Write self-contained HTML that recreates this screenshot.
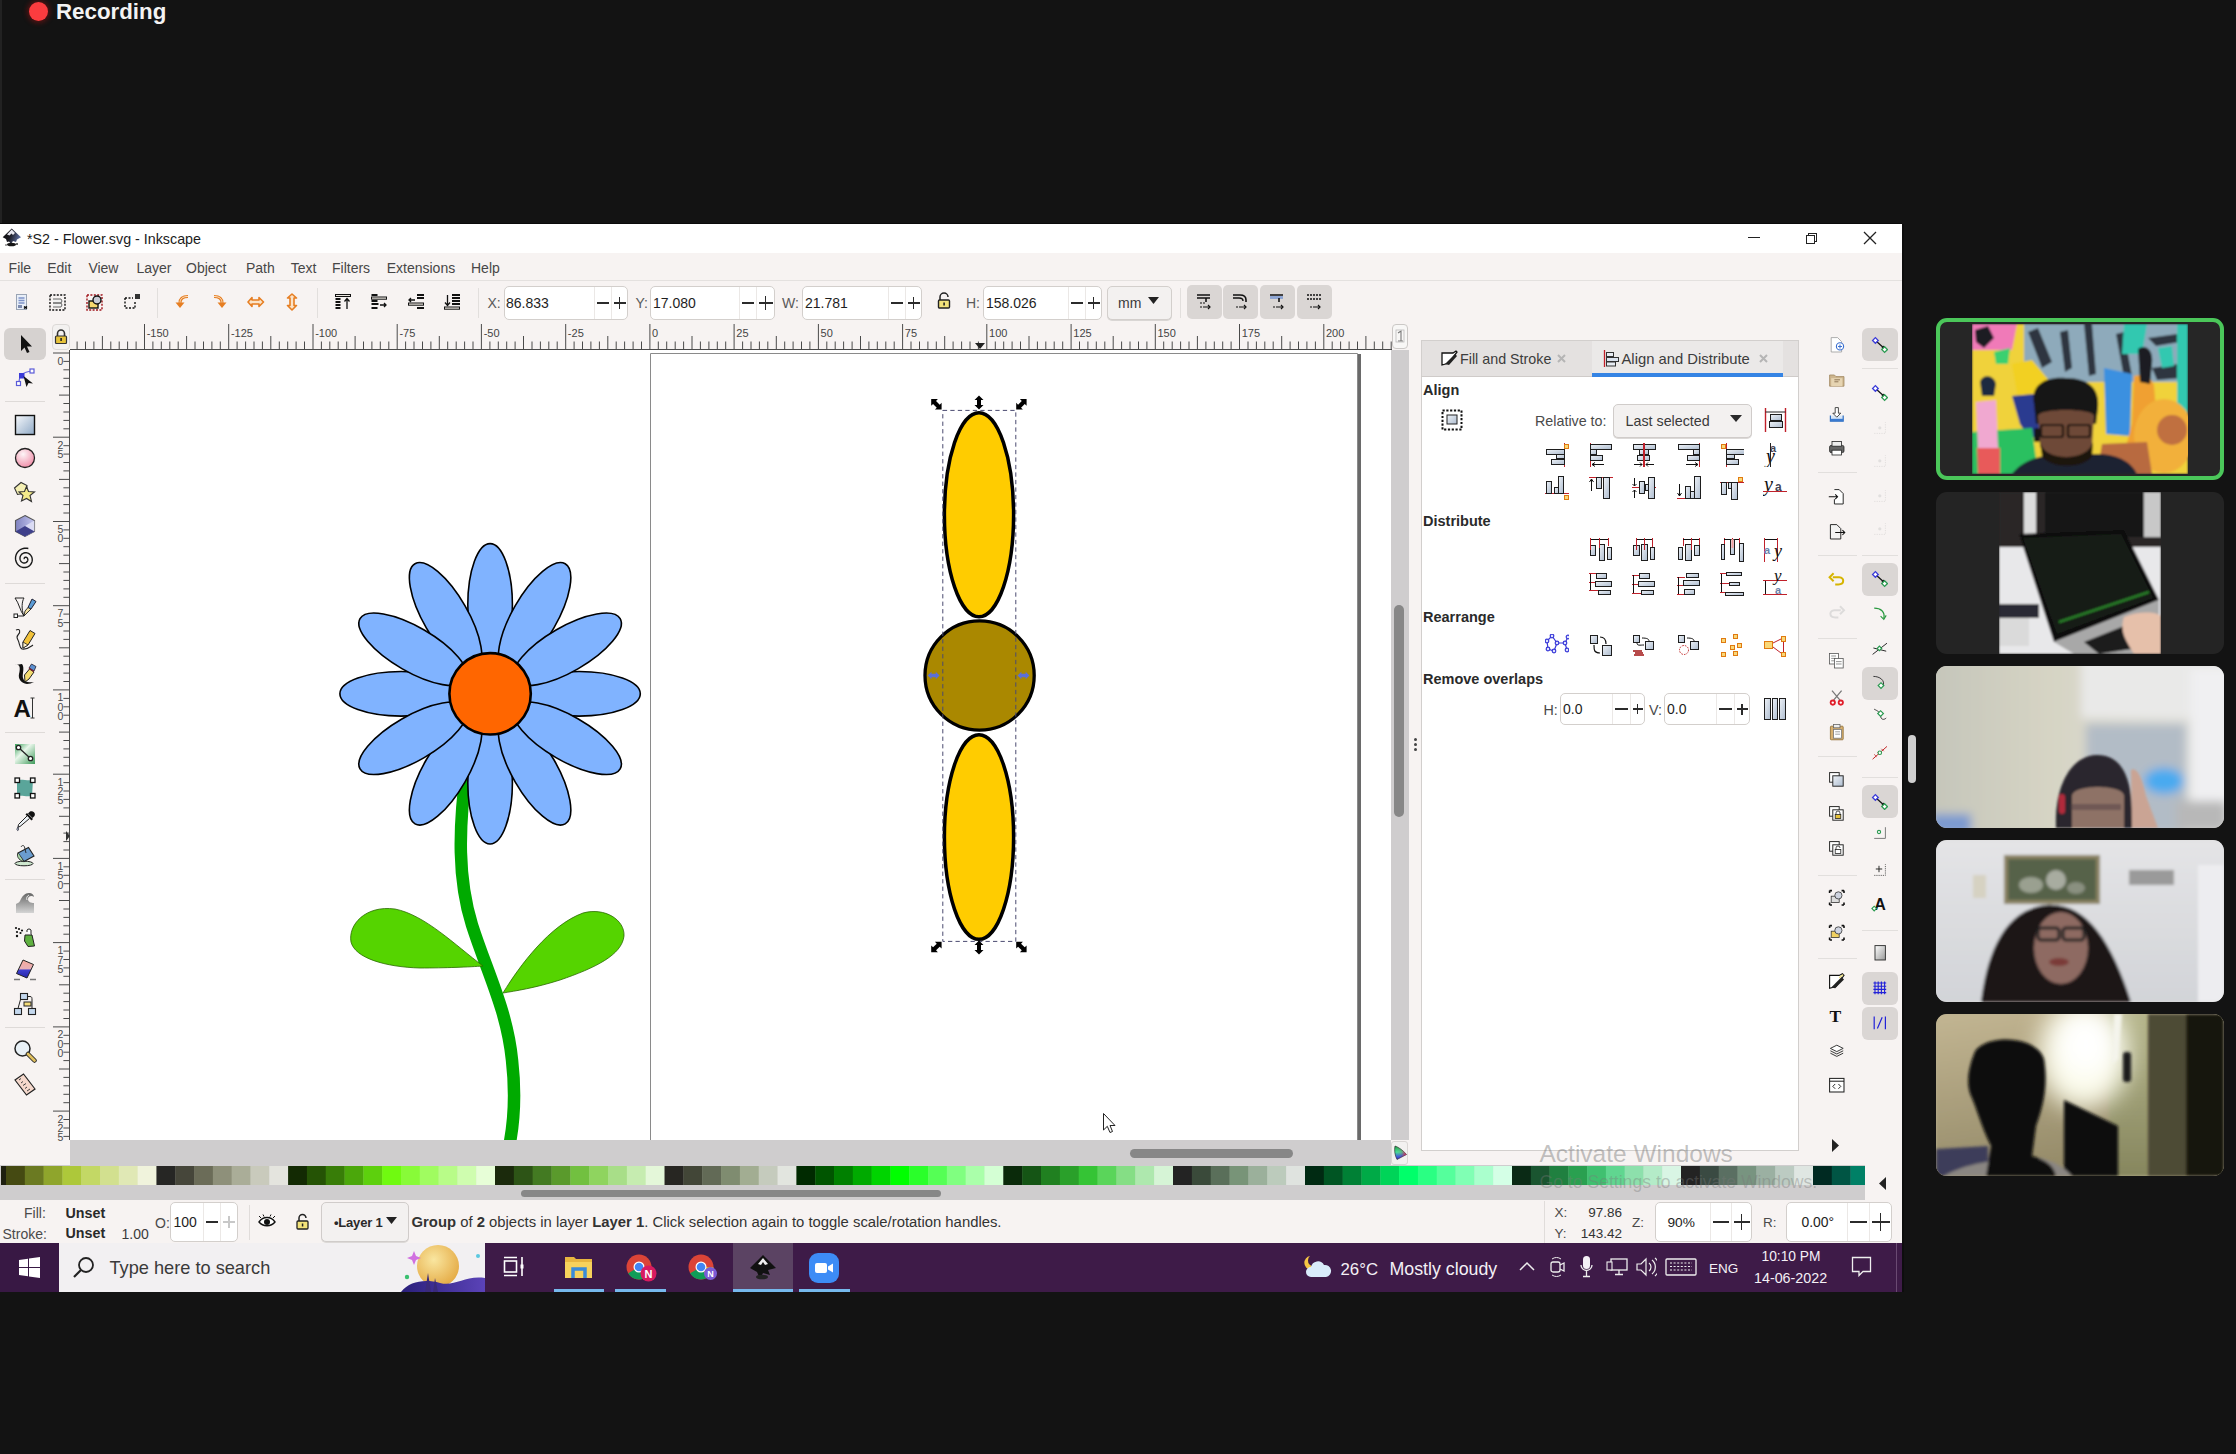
<!DOCTYPE html>
<html><head><meta charset="utf-8">
<style>
*{margin:0;padding:0;box-sizing:border-box}
html,body{width:2236px;height:1454px;overflow:hidden;background:#131313;font-family:"Liberation Sans",sans-serif}
.a{position:absolute;display:block}
.t{position:absolute;white-space:nowrap}
</style></head>
<body>
<div class="a" style="left:29px;top:2px;width:19px;height:19px;border-radius:50%;background:#fb3c3f;box-shadow:0 0 5px 2px rgba(160,20,20,.45)"></div>
<div class="t" style="left:56px;top:1.34px;font-size:22.3px;line-height:22.3px;color:#f3f3f3;font-weight:bold;">Recording</div>
<div class="a" style="left:0px;top:224px;width:1902px;height:29px;background:#fff"></div>
<div class="a" style="left:0px;top:0px;width:2px;height:223px;background:#222"></div>
<div class="a" style="left:0px;top:223px;width:1902px;height:1px;background:#0a0a0a"></div>
<svg class="a" style="left:2px;top:227px;" width="21" height="22" viewBox="0 0 21 22"><defs><linearGradient id="ilg" x1="0" y1="0" x2="1" y2="0.3"><stop offset="0" stop-color="#0a0a0a"/><stop offset=".5" stop-color="#1a1a22"/><stop offset="1" stop-color="#5a6a9a"/></linearGradient></defs>
<path d="M9.7 1.4 L19 10.3 L15 12.5 L14 15 L11 14 L9 17 L7 14.5 L5 15 L4 12 L0.7 10.3 Z" fill="url(#ilg)"/>
<path d="M9.7 2.5 L13 6 L11 8 L9.5 6.5 L7.5 8.5 L5 7.5 Z" fill="#e8e8f0"/>
<ellipse cx="9.5" cy="17.5" rx="4.5" ry="1.8" fill="#151515"/><circle cx="15" cy="17" r="1" fill="#333"/><circle cx="4" cy="18" r="0.8" fill="#333"/></svg>
<div class="t" style="left:27px;top:231.84px;font-size:14.3px;line-height:14.3px;color:#1b1b1b;font-weight:normal;">*S2 - Flower.svg - Inkscape</div>
<div class="a" style="left:1748px;top:237px;width:12px;height:1px;background:#222"></div>
<div class="a" style="left:1808px;top:233px;width:9px;height:9px;border:1px solid #222;background:#fff"></div>
<div class="a" style="left:1806px;top:235px;width:9px;height:9px;border:1px solid #222;background:#fff"></div>
<svg class="a" style="left:1862px;top:230px;" width="16" height="16" viewBox="0 0 16 16"><path d="M2 2 L14 14 M14 2 L2 14" stroke="#222" stroke-width="1.3"/></svg>
<div class="a" style="left:0px;top:253px;width:1902px;height:69px;background:#f7f3f2"></div>
<div class="a" style="left:0px;top:280px;width:1902px;height:1px;background:#e4e1df"></div>
<div class="t" style="left:8.6px;top:261.40px;font-size:14px;line-height:14px;color:#474747;font-weight:normal;">File</div>
<div class="t" style="left:47.2px;top:261.40px;font-size:14px;line-height:14px;color:#474747;font-weight:normal;">Edit</div>
<div class="t" style="left:88.4px;top:261.40px;font-size:14px;line-height:14px;color:#474747;font-weight:normal;">View</div>
<div class="t" style="left:136.5px;top:261.40px;font-size:14px;line-height:14px;color:#474747;font-weight:normal;">Layer</div>
<div class="t" style="left:186px;top:261.40px;font-size:14px;line-height:14px;color:#474747;font-weight:normal;">Object</div>
<div class="t" style="left:246px;top:261.40px;font-size:14px;line-height:14px;color:#474747;font-weight:normal;">Path</div>
<div class="t" style="left:290.7px;top:261.40px;font-size:14px;line-height:14px;color:#474747;font-weight:normal;">Text</div>
<div class="t" style="left:332px;top:261.40px;font-size:14px;line-height:14px;color:#474747;font-weight:normal;">Filters</div>
<div class="t" style="left:386.7px;top:261.40px;font-size:14px;line-height:14px;color:#474747;font-weight:normal;">Extensions</div>
<div class="t" style="left:471px;top:261.40px;font-size:14px;line-height:14px;color:#474747;font-weight:normal;">Help</div>
<div class="a" style="left:157px;top:288px;width:1px;height:30px;background:#e2dfdd"></div>
<div class="a" style="left:317px;top:288px;width:1px;height:30px;background:#e2dfdd"></div>
<div class="a" style="left:478px;top:288px;width:1px;height:30px;background:#e2dfdd"></div>
<div class="a" style="left:1180px;top:288px;width:1px;height:30px;background:#e2dfdd"></div>
<svg class="a" style="left:16px;top:294px;" width="13" height="17" viewBox="0 0 13 17"><rect x="0.5" y="0.5" width="10" height="15" fill="#e8eef8" stroke="#9aa4b4"/><path d="M2.5 4h6M2.5 6.5h6M2.5 9h6" stroke="#7d92c7" stroke-width="1.3"/><rect x="2" y="11" width="4" height="3" fill="#7d8bb0"/><path d="M8 12.5l3 2M11 12.5l-3 2" stroke="#000" stroke-width="1.4"/></svg>
<svg class="a" style="left:49px;top:294px;" width="18" height="17" viewBox="0 0 18 17"><rect x="1" y="1" width="15" height="15" fill="none" stroke="#111" stroke-width="1.4" stroke-dasharray="2 1.4"/><path d="M4 5h8l1 2-1 2H4M4 9h8l1 2-1 2H4" fill="#f0f0f0" stroke="#666" stroke-width="1"/></svg>
<svg class="a" style="left:86px;top:294px;" width="18" height="17" viewBox="0 0 18 17"><rect x="1" y="1" width="15" height="15" fill="none" stroke="#a0141b" stroke-width="1.4" stroke-dasharray="2 1.4"/><rect x="3" y="7" width="9" height="7" fill="#f5d76e" stroke="#111" stroke-width="1.4"/><circle cx="11" cy="6" r="4" fill="#c9ccd6" stroke="#111" stroke-width="1.4"/></svg>
<svg class="a" style="left:124px;top:294px;" width="16" height="16" viewBox="0 0 16 16"><path d="M1 4v10h10" fill="none" stroke="#111" stroke-width="1.4" stroke-dasharray="2 1.5"/><path d="M1 4h8M11 8v6" fill="none" stroke="#111" stroke-width="1.4" stroke-dasharray="2 1.5"/><rect x="11" y="0" width="5" height="5" fill="#333"/></svg>
<svg class="a" style="left:174px;top:294px;" width="16" height="16" viewBox="0 0 16 16"><path d="M14 2.5 C8 2.5 6 5 6 9" fill="none" stroke="#e67e22" stroke-width="3"/><path d="M14 2.5 C8 2.5 6 5 6 9" fill="none" stroke="#fbe3c8" stroke-width="1"/><path d="M1.5 8.5 L6 14 L10.5 8.5 Z" fill="#e67e22"/></svg>
<svg class="a" style="left:212px;top:294px;" width="16" height="16" viewBox="0 0 16 16"><path d="M2 2.5 C8 2.5 10 5 10 9" fill="none" stroke="#e67e22" stroke-width="3"/><path d="M2 2.5 C8 2.5 10 5 10 9" fill="none" stroke="#fbe3c8" stroke-width="1"/><path d="M5.5 8.5 L10 14 L14.5 8.5 Z" fill="#e67e22"/></svg>
<svg class="a" style="left:247px;top:294px;" width="18" height="16" viewBox="0 0 18 16"><path d="M1 8 L5 3.5 V6 H12 V3.5 L16.5 8 L12 12.5 V10 H5 V12.5 Z" fill="#fbe3c8" stroke="#e67e22" stroke-width="1.6" stroke-linejoin="round"/></svg>
<svg class="a" style="left:285px;top:293px;" width="14" height="18" viewBox="0 0 14 18"><path d="M7 1 L11.5 5 H9 V12.5 H11.5 L7 17 L2.5 12.5 H5 V5 H2.5 Z" fill="#fbe3c8" stroke="#e67e22" stroke-width="1.6" stroke-linejoin="round"/></svg>
<svg class="a" style="left:335px;top:294px;" width="17" height="16" viewBox="0 0 17 16"><rect x="0.5" y="0.5" width="15" height="2" fill="#ece7e0" stroke="#111" stroke-width="1"/><path d="M0.5 5h5M0.5 8h5M0.5 11h5M0.5 14h5" stroke="#111" stroke-width="1.8"/><path d="M12 15V5M9.5 7.5L12 4.5 14.5 7.5" fill="none" stroke="#111" stroke-width="1.3"/></svg>
<svg class="a" style="left:371px;top:294px;" width="17" height="16" viewBox="0 0 17 16"><path d="M0.5 1h6M0.5 7h6M0.5 10h7M0.5 14h6" stroke="#111" stroke-width="1.8"/><rect x="0.5" y="3" width="15" height="2.2" fill="#ece7e0" stroke="#111" stroke-width="1"/><path d="M9 11h6M13 9l2 2-2 2" fill="none" stroke="#111" stroke-width="1.3"/></svg>
<svg class="a" style="left:408px;top:294px;" width="17" height="16" viewBox="0 0 17 16"><path d="M9 1h7M9 4h7M9 14h7" stroke="#111" stroke-width="1.8"/><rect x="0.5" y="9" width="15" height="2.2" fill="#ece7e0" stroke="#111" stroke-width="1"/><path d="M1 6h6M3 4l-2 2 2 2" fill="none" stroke="#111" stroke-width="1.3"/></svg>
<svg class="a" style="left:444px;top:294px;" width="17" height="16" viewBox="0 0 17 16"><path d="M8 1h8M8 4h8M8 7h8M8 10h8" stroke="#111" stroke-width="1.8"/><rect x="0.5" y="13" width="15" height="2.2" fill="#ece7e0" stroke="#111" stroke-width="1"/><path d="M3.5 1V11M1 8.5L3.5 11.5 6 8.5" fill="none" stroke="#111" stroke-width="1.3"/></svg>
<div class="t" style="left:487.5px;top:296.10px;font-size:14px;line-height:14px;color:#5a5a5a;font-weight:normal;">X:</div>
<div class="a" style="left:504px;top:286px;width:124px;height:34px;background:#fff;border:1px solid #d3cfcc;border-radius:5px"></div>
<div class="a" style="left:594px;top:287px;width:1px;height:32px;background:#ebe8e6"></div>
<div class="a" style="left:611px;top:287px;width:1px;height:32px;background:#ebe8e6"></div>
<div class="a" style="left:596.5px;top:302.3px;width:12px;height:1.5px;background:#2b2b2b"></div>
<div class="a" style="left:613.5px;top:302.3px;width:12px;height:1.5px;background:#2b2b2b"></div>
<div class="a" style="left:618.75px;top:297.0px;width:1.5px;height:12px;background:#2b2b2b"></div>
<div class="t" style="left:506px;top:296.10px;font-size:14px;line-height:14px;color:#1e1e1e;font-weight:normal;">86.833</div>
<div class="t" style="left:635.5px;top:296.10px;font-size:14px;line-height:14px;color:#5a5a5a;font-weight:normal;">Y:</div>
<div class="a" style="left:650px;top:286px;width:125px;height:34px;background:#fff;border:1px solid #d3cfcc;border-radius:5px"></div>
<div class="a" style="left:739px;top:287px;width:1px;height:32px;background:#ebe8e6"></div>
<div class="a" style="left:756px;top:287px;width:1px;height:32px;background:#ebe8e6"></div>
<div class="a" style="left:741.5px;top:302.3px;width:12px;height:1.5px;background:#2b2b2b"></div>
<div class="a" style="left:758.5px;top:302.3px;width:14px;height:1.5px;background:#2b2b2b"></div>
<div class="a" style="left:764.75px;top:296.0px;width:1.5px;height:14px;background:#2b2b2b"></div>
<div class="t" style="left:653px;top:296.10px;font-size:14px;line-height:14px;color:#1e1e1e;font-weight:normal;">17.080</div>
<div class="t" style="left:782px;top:296.10px;font-size:14px;line-height:14px;color:#5a5a5a;font-weight:normal;">W:</div>
<div class="a" style="left:802px;top:286px;width:120px;height:34px;background:#fff;border:1px solid #d3cfcc;border-radius:5px"></div>
<div class="a" style="left:888px;top:287px;width:1px;height:32px;background:#ebe8e6"></div>
<div class="a" style="left:905px;top:287px;width:1px;height:32px;background:#ebe8e6"></div>
<div class="a" style="left:890.5px;top:302.3px;width:12px;height:1.5px;background:#2b2b2b"></div>
<div class="a" style="left:907.5px;top:302.3px;width:12px;height:1.5px;background:#2b2b2b"></div>
<div class="a" style="left:912.75px;top:297.0px;width:1.5px;height:12px;background:#2b2b2b"></div>
<div class="t" style="left:805px;top:296.10px;font-size:14px;line-height:14px;color:#1e1e1e;font-weight:normal;">21.781</div>
<div class="t" style="left:966px;top:296.10px;font-size:14px;line-height:14px;color:#5a5a5a;font-weight:normal;">H:</div>
<div class="a" style="left:983px;top:286px;width:119px;height:34px;background:#fff;border:1px solid #d3cfcc;border-radius:5px"></div>
<div class="a" style="left:1068px;top:287px;width:1px;height:32px;background:#ebe8e6"></div>
<div class="a" style="left:1085px;top:287px;width:1px;height:32px;background:#ebe8e6"></div>
<div class="a" style="left:1070.5px;top:302.3px;width:12px;height:1.5px;background:#2b2b2b"></div>
<div class="a" style="left:1087.5px;top:302.3px;width:12px;height:1.5px;background:#2b2b2b"></div>
<div class="a" style="left:1092.75px;top:297.0px;width:1.5px;height:12px;background:#2b2b2b"></div>
<div class="t" style="left:986px;top:296.10px;font-size:14px;line-height:14px;color:#1e1e1e;font-weight:normal;">158.026</div>
<svg class="a" style="left:936px;top:292px;" width="16" height="18" viewBox="0 0 16 18"><path d="M4 8 V5 A4 4 0 0 1 12 5" fill="none" stroke="#222" stroke-width="1.5"/><rect x="2.5" y="8" width="11" height="8" rx="1" fill="#f2e27a" stroke="#222" stroke-width="1.4"/><rect x="7.3" y="10.5" width="1.6" height="3" fill="#222"/></svg>
<div class="a" style="left:1107px;top:286px;width:65px;height:34px;background:#f3f1f0;border:1px solid #d3cfcc;border-radius:5px;box-shadow:0 1px 0 #d9d6d4"></div>
<div class="t" style="left:1118px;top:296.10px;font-size:14px;line-height:14px;color:#3a3a3a;font-weight:normal;">mm</div>
<svg class="a" style="left:1148px;top:297px;" width="11" height="8" viewBox="0 0 11 8"><path d="M0 0 H11 L5.5 7 Z" fill="#222"/></svg>
<div class="a" style="left:1187px;top:285px;width:35px;height:34px;background:#dad6d4;border-radius:5px"></div>
<div class="a" style="left:1223px;top:285px;width:35px;height:34px;background:#dad6d4;border-radius:5px"></div>
<div class="a" style="left:1260px;top:285px;width:35px;height:34px;background:#dad6d4;border-radius:5px"></div>
<div class="a" style="left:1297px;top:285px;width:35px;height:34px;background:#dad6d4;border-radius:5px"></div>
<svg class="a" style="left:1196px;top:293px;" width="18" height="18" viewBox="0 0 18 18"><path d="M1 2h13M1 5h13M10 5v4" stroke="#111" stroke-width="1.6" fill="none"/><path d="M4 10h2M7 10h2M4 14h2M7 14h6" stroke="#111" stroke-width="1.2"/><path d="M12 12l2 2-2 2" fill="none" stroke="#111" stroke-width="1.2"/></svg>
<svg class="a" style="left:1232px;top:293px;" width="18" height="18" viewBox="0 0 18 18"><path d="M1 2h7c4 0 6 2 6 5v2" stroke="#111" stroke-width="1.6" fill="none"/><path d="M1 5h6c2 0 4 1 4 3" stroke="#111" stroke-width="1.4" fill="none"/><path d="M4 14h2M7 14h6" stroke="#111" stroke-width="1.2"/><path d="M12 12l2 2-2 2" fill="none" stroke="#111" stroke-width="1.2"/></svg>
<svg class="a" style="left:1269px;top:293px;" width="18" height="18" viewBox="0 0 18 18"><rect x="1" y="3" width="13" height="3" fill="#8fa6d3"/><path d="M1 2h13M10 5v4" stroke="#111" stroke-width="1.6" fill="none"/><path d="M4 14h2M7 14h6" stroke="#111" stroke-width="1.2"/><path d="M12 12l2 2-2 2" fill="none" stroke="#111" stroke-width="1.2"/></svg>
<svg class="a" style="left:1306px;top:293px;" width="18" height="18" viewBox="0 0 18 18"><path d="M1 2h14M1 6h14" stroke="#111" stroke-width="1.6" stroke-dasharray="2 1"/><path d="M4 14h2M7 14h6" stroke="#111" stroke-width="1.2"/><path d="M12 12l2 2-2 2" fill="none" stroke="#111" stroke-width="1.2"/></svg>
<div class="a" style="left:0px;top:322px;width:1902px;height:921px;background:#f7f3f2"></div>
<svg class="a" style="left:70px;top:322px;" width="1322" height="28" viewBox="0 0 1322 28"><g stroke="#4a4a4a" stroke-width="1"><line x1="7.1" y1="19.5" x2="7.1" y2="27" /><line x1="15.5" y1="19.5" x2="15.5" y2="27" /><line x1="23.9" y1="19.5" x2="23.9" y2="27" /><line x1="32.4" y1="14" x2="32.4" y2="27" /><line x1="40.8" y1="19.5" x2="40.8" y2="27" /><line x1="49.2" y1="19.5" x2="49.2" y2="27" /><line x1="57.6" y1="19.5" x2="57.6" y2="27" /><line x1="66.1" y1="19.5" x2="66.1" y2="27" /><line x1="74.5" y1="2" x2="74.5" y2="27" /><line x1="82.9" y1="19.5" x2="82.9" y2="27" /><line x1="91.3" y1="19.5" x2="91.3" y2="27" /><line x1="99.8" y1="19.5" x2="99.8" y2="27" /><line x1="108.2" y1="19.5" x2="108.2" y2="27" /><line x1="116.6" y1="14" x2="116.6" y2="27" /><line x1="125.0" y1="19.5" x2="125.0" y2="27" /><line x1="133.5" y1="19.5" x2="133.5" y2="27" /><line x1="141.9" y1="19.5" x2="141.9" y2="27" /><line x1="150.3" y1="19.5" x2="150.3" y2="27" /><line x1="158.7" y1="2" x2="158.7" y2="27" /><line x1="167.1" y1="19.5" x2="167.1" y2="27" /><line x1="175.6" y1="19.5" x2="175.6" y2="27" /><line x1="184.0" y1="19.5" x2="184.0" y2="27" /><line x1="192.4" y1="19.5" x2="192.4" y2="27" /><line x1="200.8" y1="14" x2="200.8" y2="27" /><line x1="209.3" y1="19.5" x2="209.3" y2="27" /><line x1="217.7" y1="19.5" x2="217.7" y2="27" /><line x1="226.1" y1="19.5" x2="226.1" y2="27" /><line x1="234.5" y1="19.5" x2="234.5" y2="27" /><line x1="243.0" y1="2" x2="243.0" y2="27" /><line x1="251.4" y1="19.5" x2="251.4" y2="27" /><line x1="259.8" y1="19.5" x2="259.8" y2="27" /><line x1="268.2" y1="19.5" x2="268.2" y2="27" /><line x1="276.7" y1="19.5" x2="276.7" y2="27" /><line x1="285.1" y1="14" x2="285.1" y2="27" /><line x1="293.5" y1="19.5" x2="293.5" y2="27" /><line x1="301.9" y1="19.5" x2="301.9" y2="27" /><line x1="310.3" y1="19.5" x2="310.3" y2="27" /><line x1="318.8" y1="19.5" x2="318.8" y2="27" /><line x1="327.2" y1="2" x2="327.2" y2="27" /><line x1="335.6" y1="19.5" x2="335.6" y2="27" /><line x1="344.0" y1="19.5" x2="344.0" y2="27" /><line x1="352.5" y1="19.5" x2="352.5" y2="27" /><line x1="360.9" y1="19.5" x2="360.9" y2="27" /><line x1="369.3" y1="14" x2="369.3" y2="27" /><line x1="377.7" y1="19.5" x2="377.7" y2="27" /><line x1="386.2" y1="19.5" x2="386.2" y2="27" /><line x1="394.6" y1="19.5" x2="394.6" y2="27" /><line x1="403.0" y1="19.5" x2="403.0" y2="27" /><line x1="411.4" y1="2" x2="411.4" y2="27" /><line x1="419.9" y1="19.5" x2="419.9" y2="27" /><line x1="428.3" y1="19.5" x2="428.3" y2="27" /><line x1="436.7" y1="19.5" x2="436.7" y2="27" /><line x1="445.1" y1="19.5" x2="445.1" y2="27" /><line x1="453.5" y1="14" x2="453.5" y2="27" /><line x1="462.0" y1="19.5" x2="462.0" y2="27" /><line x1="470.4" y1="19.5" x2="470.4" y2="27" /><line x1="478.8" y1="19.5" x2="478.8" y2="27" /><line x1="487.2" y1="19.5" x2="487.2" y2="27" /><line x1="495.7" y1="2" x2="495.7" y2="27" /><line x1="504.1" y1="19.5" x2="504.1" y2="27" /><line x1="512.5" y1="19.5" x2="512.5" y2="27" /><line x1="520.9" y1="19.5" x2="520.9" y2="27" /><line x1="529.4" y1="19.5" x2="529.4" y2="27" /><line x1="537.8" y1="14" x2="537.8" y2="27" /><line x1="546.2" y1="19.5" x2="546.2" y2="27" /><line x1="554.6" y1="19.5" x2="554.6" y2="27" /><line x1="563.1" y1="19.5" x2="563.1" y2="27" /><line x1="571.5" y1="19.5" x2="571.5" y2="27" /><line x1="579.9" y1="2" x2="579.9" y2="27" /><line x1="588.3" y1="19.5" x2="588.3" y2="27" /><line x1="596.7" y1="19.5" x2="596.7" y2="27" /><line x1="605.2" y1="19.5" x2="605.2" y2="27" /><line x1="613.6" y1="19.5" x2="613.6" y2="27" /><line x1="622.0" y1="14" x2="622.0" y2="27" /><line x1="630.4" y1="19.5" x2="630.4" y2="27" /><line x1="638.9" y1="19.5" x2="638.9" y2="27" /><line x1="647.3" y1="19.5" x2="647.3" y2="27" /><line x1="655.7" y1="19.5" x2="655.7" y2="27" /><line x1="664.1" y1="2" x2="664.1" y2="27" /><line x1="672.6" y1="19.5" x2="672.6" y2="27" /><line x1="681.0" y1="19.5" x2="681.0" y2="27" /><line x1="689.4" y1="19.5" x2="689.4" y2="27" /><line x1="697.8" y1="19.5" x2="697.8" y2="27" /><line x1="706.3" y1="14" x2="706.3" y2="27" /><line x1="714.7" y1="19.5" x2="714.7" y2="27" /><line x1="723.1" y1="19.5" x2="723.1" y2="27" /><line x1="731.5" y1="19.5" x2="731.5" y2="27" /><line x1="739.9" y1="19.5" x2="739.9" y2="27" /><line x1="748.4" y1="2" x2="748.4" y2="27" /><line x1="756.8" y1="19.5" x2="756.8" y2="27" /><line x1="765.2" y1="19.5" x2="765.2" y2="27" /><line x1="773.6" y1="19.5" x2="773.6" y2="27" /><line x1="782.1" y1="19.5" x2="782.1" y2="27" /><line x1="790.5" y1="14" x2="790.5" y2="27" /><line x1="798.9" y1="19.5" x2="798.9" y2="27" /><line x1="807.3" y1="19.5" x2="807.3" y2="27" /><line x1="815.8" y1="19.5" x2="815.8" y2="27" /><line x1="824.2" y1="19.5" x2="824.2" y2="27" /><line x1="832.6" y1="2" x2="832.6" y2="27" /><line x1="841.0" y1="19.5" x2="841.0" y2="27" /><line x1="849.5" y1="19.5" x2="849.5" y2="27" /><line x1="857.9" y1="19.5" x2="857.9" y2="27" /><line x1="866.3" y1="19.5" x2="866.3" y2="27" /><line x1="874.7" y1="14" x2="874.7" y2="27" /><line x1="883.1" y1="19.5" x2="883.1" y2="27" /><line x1="891.6" y1="19.5" x2="891.6" y2="27" /><line x1="900.0" y1="19.5" x2="900.0" y2="27" /><line x1="908.4" y1="19.5" x2="908.4" y2="27" /><line x1="916.8" y1="2" x2="916.8" y2="27" /><line x1="925.3" y1="19.5" x2="925.3" y2="27" /><line x1="933.7" y1="19.5" x2="933.7" y2="27" /><line x1="942.1" y1="19.5" x2="942.1" y2="27" /><line x1="950.5" y1="19.5" x2="950.5" y2="27" /><line x1="959.0" y1="14" x2="959.0" y2="27" /><line x1="967.4" y1="19.5" x2="967.4" y2="27" /><line x1="975.8" y1="19.5" x2="975.8" y2="27" /><line x1="984.2" y1="19.5" x2="984.2" y2="27" /><line x1="992.7" y1="19.5" x2="992.7" y2="27" /><line x1="1001.1" y1="2" x2="1001.1" y2="27" /><line x1="1009.5" y1="19.5" x2="1009.5" y2="27" /><line x1="1017.9" y1="19.5" x2="1017.9" y2="27" /><line x1="1026.3" y1="19.5" x2="1026.3" y2="27" /><line x1="1034.8" y1="19.5" x2="1034.8" y2="27" /><line x1="1043.2" y1="14" x2="1043.2" y2="27" /><line x1="1051.6" y1="19.5" x2="1051.6" y2="27" /><line x1="1060.0" y1="19.5" x2="1060.0" y2="27" /><line x1="1068.5" y1="19.5" x2="1068.5" y2="27" /><line x1="1076.9" y1="19.5" x2="1076.9" y2="27" /><line x1="1085.3" y1="2" x2="1085.3" y2="27" /><line x1="1093.7" y1="19.5" x2="1093.7" y2="27" /><line x1="1102.2" y1="19.5" x2="1102.2" y2="27" /><line x1="1110.6" y1="19.5" x2="1110.6" y2="27" /><line x1="1119.0" y1="19.5" x2="1119.0" y2="27" /><line x1="1127.4" y1="14" x2="1127.4" y2="27" /><line x1="1135.9" y1="19.5" x2="1135.9" y2="27" /><line x1="1144.3" y1="19.5" x2="1144.3" y2="27" /><line x1="1152.7" y1="19.5" x2="1152.7" y2="27" /><line x1="1161.1" y1="19.5" x2="1161.1" y2="27" /><line x1="1169.5" y1="2" x2="1169.5" y2="27" /><line x1="1178.0" y1="19.5" x2="1178.0" y2="27" /><line x1="1186.4" y1="19.5" x2="1186.4" y2="27" /><line x1="1194.8" y1="19.5" x2="1194.8" y2="27" /><line x1="1203.2" y1="19.5" x2="1203.2" y2="27" /><line x1="1211.7" y1="14" x2="1211.7" y2="27" /><line x1="1220.1" y1="19.5" x2="1220.1" y2="27" /><line x1="1228.5" y1="19.5" x2="1228.5" y2="27" /><line x1="1236.9" y1="19.5" x2="1236.9" y2="27" /><line x1="1245.4" y1="19.5" x2="1245.4" y2="27" /><line x1="1253.8" y1="2" x2="1253.8" y2="27" /><line x1="1262.2" y1="19.5" x2="1262.2" y2="27" /><line x1="1270.6" y1="19.5" x2="1270.6" y2="27" /><line x1="1279.1" y1="19.5" x2="1279.1" y2="27" /><line x1="1287.5" y1="19.5" x2="1287.5" y2="27" /><line x1="1295.9" y1="14" x2="1295.9" y2="27" /><line x1="1304.3" y1="19.5" x2="1304.3" y2="27" /><line x1="1312.7" y1="19.5" x2="1312.7" y2="27" /><line x1="1321.2" y1="19.5" x2="1321.2" y2="27" /><line x1="0" y1="27.5" x2="1322" y2="27.5"/></g><path d="M905 21 L915 21 L910 27 Z" fill="#222"/></svg>
<div class="t" style="left:146.68999999999994px;top:327.5px;font-size:11px;line-height:11px;color:#444;font-weight:normal;">-150</div>
<div class="t" style="left:230.92499999999995px;top:327.5px;font-size:11px;line-height:11px;color:#444;font-weight:normal;">-125</div>
<div class="t" style="left:315.15999999999997px;top:327.5px;font-size:11px;line-height:11px;color:#444;font-weight:normal;">-100</div>
<div class="t" style="left:399.3949999999999px;top:327.5px;font-size:11px;line-height:11px;color:#444;font-weight:normal;">-75</div>
<div class="t" style="left:483.62999999999994px;top:327.5px;font-size:11px;line-height:11px;color:#444;font-weight:normal;">-50</div>
<div class="t" style="left:567.865px;top:327.5px;font-size:11px;line-height:11px;color:#444;font-weight:normal;">-25</div>
<div class="t" style="left:652.1px;top:327.5px;font-size:11px;line-height:11px;color:#444;font-weight:normal;">0</div>
<div class="t" style="left:736.335px;top:327.5px;font-size:11px;line-height:11px;color:#444;font-weight:normal;">25</div>
<div class="t" style="left:820.57px;top:327.5px;font-size:11px;line-height:11px;color:#444;font-weight:normal;">50</div>
<div class="t" style="left:904.8050000000001px;top:327.5px;font-size:11px;line-height:11px;color:#444;font-weight:normal;">75</div>
<div class="t" style="left:989.04px;top:327.5px;font-size:11px;line-height:11px;color:#444;font-weight:normal;">100</div>
<div class="t" style="left:1073.275px;top:327.5px;font-size:11px;line-height:11px;color:#444;font-weight:normal;">125</div>
<div class="t" style="left:1157.51px;top:327.5px;font-size:11px;line-height:11px;color:#444;font-weight:normal;">150</div>
<div class="t" style="left:1241.7450000000001px;top:327.5px;font-size:11px;line-height:11px;color:#444;font-weight:normal;">175</div>
<div class="t" style="left:1325.98px;top:327.5px;font-size:11px;line-height:11px;color:#444;font-weight:normal;">200</div>
<svg class="a" style="left:50px;top:350px;" width="20" height="790" viewBox="0 0 20 790"><g stroke="#4a4a4a" stroke-width="1"><line x1="3.0" y1="3.0" x2="20" y2="3.0"/><line x1="13.4" y1="11.4" x2="20" y2="11.4"/><line x1="13.4" y1="19.8" x2="20" y2="19.8"/><line x1="13.4" y1="28.3" x2="20" y2="28.3"/><line x1="13.4" y1="36.7" x2="20" y2="36.7"/><line x1="9.0" y1="45.1" x2="20" y2="45.1"/><line x1="13.4" y1="53.5" x2="20" y2="53.5"/><line x1="13.4" y1="62.0" x2="20" y2="62.0"/><line x1="13.4" y1="70.4" x2="20" y2="70.4"/><line x1="13.4" y1="78.8" x2="20" y2="78.8"/><line x1="3.0" y1="87.2" x2="20" y2="87.2"/><line x1="13.4" y1="95.7" x2="20" y2="95.7"/><line x1="13.4" y1="104.1" x2="20" y2="104.1"/><line x1="13.4" y1="112.5" x2="20" y2="112.5"/><line x1="13.4" y1="120.9" x2="20" y2="120.9"/><line x1="9.0" y1="129.4" x2="20" y2="129.4"/><line x1="13.4" y1="137.8" x2="20" y2="137.8"/><line x1="13.4" y1="146.2" x2="20" y2="146.2"/><line x1="13.4" y1="154.6" x2="20" y2="154.6"/><line x1="13.4" y1="163.0" x2="20" y2="163.0"/><line x1="3.0" y1="171.5" x2="20" y2="171.5"/><line x1="13.4" y1="179.9" x2="20" y2="179.9"/><line x1="13.4" y1="188.3" x2="20" y2="188.3"/><line x1="13.4" y1="196.7" x2="20" y2="196.7"/><line x1="13.4" y1="205.2" x2="20" y2="205.2"/><line x1="9.0" y1="213.6" x2="20" y2="213.6"/><line x1="13.4" y1="222.0" x2="20" y2="222.0"/><line x1="13.4" y1="230.4" x2="20" y2="230.4"/><line x1="13.4" y1="238.9" x2="20" y2="238.9"/><line x1="13.4" y1="247.3" x2="20" y2="247.3"/><line x1="3.0" y1="255.7" x2="20" y2="255.7"/><line x1="13.4" y1="264.1" x2="20" y2="264.1"/><line x1="13.4" y1="272.6" x2="20" y2="272.6"/><line x1="13.4" y1="281.0" x2="20" y2="281.0"/><line x1="13.4" y1="289.4" x2="20" y2="289.4"/><line x1="9.0" y1="297.8" x2="20" y2="297.8"/><line x1="13.4" y1="306.2" x2="20" y2="306.2"/><line x1="13.4" y1="314.7" x2="20" y2="314.7"/><line x1="13.4" y1="323.1" x2="20" y2="323.1"/><line x1="13.4" y1="331.5" x2="20" y2="331.5"/><line x1="3.0" y1="339.9" x2="20" y2="339.9"/><line x1="13.4" y1="348.4" x2="20" y2="348.4"/><line x1="13.4" y1="356.8" x2="20" y2="356.8"/><line x1="13.4" y1="365.2" x2="20" y2="365.2"/><line x1="13.4" y1="373.6" x2="20" y2="373.6"/><line x1="9.0" y1="382.1" x2="20" y2="382.1"/><line x1="13.4" y1="390.5" x2="20" y2="390.5"/><line x1="13.4" y1="398.9" x2="20" y2="398.9"/><line x1="13.4" y1="407.3" x2="20" y2="407.3"/><line x1="13.4" y1="415.8" x2="20" y2="415.8"/><line x1="3.0" y1="424.2" x2="20" y2="424.2"/><line x1="13.4" y1="432.6" x2="20" y2="432.6"/><line x1="13.4" y1="441.0" x2="20" y2="441.0"/><line x1="13.4" y1="449.4" x2="20" y2="449.4"/><line x1="13.4" y1="457.9" x2="20" y2="457.9"/><line x1="9.0" y1="466.3" x2="20" y2="466.3"/><line x1="13.4" y1="474.7" x2="20" y2="474.7"/><line x1="13.4" y1="483.1" x2="20" y2="483.1"/><line x1="13.4" y1="491.6" x2="20" y2="491.6"/><line x1="13.4" y1="500.0" x2="20" y2="500.0"/><line x1="3.0" y1="508.4" x2="20" y2="508.4"/><line x1="13.4" y1="516.8" x2="20" y2="516.8"/><line x1="13.4" y1="525.3" x2="20" y2="525.3"/><line x1="13.4" y1="533.7" x2="20" y2="533.7"/><line x1="13.4" y1="542.1" x2="20" y2="542.1"/><line x1="9.0" y1="550.5" x2="20" y2="550.5"/><line x1="13.4" y1="559.0" x2="20" y2="559.0"/><line x1="13.4" y1="567.4" x2="20" y2="567.4"/><line x1="13.4" y1="575.8" x2="20" y2="575.8"/><line x1="13.4" y1="584.2" x2="20" y2="584.2"/><line x1="3.0" y1="592.6" x2="20" y2="592.6"/><line x1="13.4" y1="601.1" x2="20" y2="601.1"/><line x1="13.4" y1="609.5" x2="20" y2="609.5"/><line x1="13.4" y1="617.9" x2="20" y2="617.9"/><line x1="13.4" y1="626.3" x2="20" y2="626.3"/><line x1="9.0" y1="634.8" x2="20" y2="634.8"/><line x1="13.4" y1="643.2" x2="20" y2="643.2"/><line x1="13.4" y1="651.6" x2="20" y2="651.6"/><line x1="13.4" y1="660.0" x2="20" y2="660.0"/><line x1="13.4" y1="668.5" x2="20" y2="668.5"/><line x1="3.0" y1="676.9" x2="20" y2="676.9"/><line x1="13.4" y1="685.3" x2="20" y2="685.3"/><line x1="13.4" y1="693.7" x2="20" y2="693.7"/><line x1="13.4" y1="702.2" x2="20" y2="702.2"/><line x1="13.4" y1="710.6" x2="20" y2="710.6"/><line x1="9.0" y1="719.0" x2="20" y2="719.0"/><line x1="13.4" y1="727.4" x2="20" y2="727.4"/><line x1="13.4" y1="735.8" x2="20" y2="735.8"/><line x1="13.4" y1="744.3" x2="20" y2="744.3"/><line x1="13.4" y1="752.7" x2="20" y2="752.7"/><line x1="3.0" y1="761.1" x2="20" y2="761.1"/><line x1="13.4" y1="769.5" x2="20" y2="769.5"/><line x1="13.4" y1="778.0" x2="20" y2="778.0"/><line x1="13.4" y1="786.4" x2="20" y2="786.4"/><line x1="19.5" y1="0" x2="19.5" y2="790"/></g><path d="M16 481 L20 486 L16 491 Z" fill="#333"/></svg>
<div class="t" style="left:57.5px;top:355.5px;font-size:10.5px;line-height:10.5px;color:#4a4a4a;font-weight:normal;">0</div>
<div class="t" style="left:57.5px;top:439.735px;font-size:10.5px;line-height:10.5px;color:#4a4a4a;font-weight:normal;">2</div>
<div class="t" style="left:57.5px;top:449.135px;font-size:10.5px;line-height:10.5px;color:#4a4a4a;font-weight:normal;">5</div>
<div class="t" style="left:57.5px;top:523.97px;font-size:10.5px;line-height:10.5px;color:#4a4a4a;font-weight:normal;">5</div>
<div class="t" style="left:57.5px;top:533.37px;font-size:10.5px;line-height:10.5px;color:#4a4a4a;font-weight:normal;">0</div>
<div class="t" style="left:57.5px;top:608.205px;font-size:10.5px;line-height:10.5px;color:#4a4a4a;font-weight:normal;">7</div>
<div class="t" style="left:57.5px;top:617.605px;font-size:10.5px;line-height:10.5px;color:#4a4a4a;font-weight:normal;">5</div>
<div class="t" style="left:57.5px;top:692.44px;font-size:10.5px;line-height:10.5px;color:#4a4a4a;font-weight:normal;">1</div>
<div class="t" style="left:57.5px;top:701.84px;font-size:10.5px;line-height:10.5px;color:#4a4a4a;font-weight:normal;">0</div>
<div class="t" style="left:57.5px;top:711.24px;font-size:10.5px;line-height:10.5px;color:#4a4a4a;font-weight:normal;">0</div>
<div class="t" style="left:57.5px;top:776.675px;font-size:10.5px;line-height:10.5px;color:#4a4a4a;font-weight:normal;">1</div>
<div class="t" style="left:57.5px;top:786.0749999999999px;font-size:10.5px;line-height:10.5px;color:#4a4a4a;font-weight:normal;">2</div>
<div class="t" style="left:57.5px;top:795.4749999999999px;font-size:10.5px;line-height:10.5px;color:#4a4a4a;font-weight:normal;">5</div>
<div class="t" style="left:57.5px;top:860.9100000000001px;font-size:10.5px;line-height:10.5px;color:#4a4a4a;font-weight:normal;">1</div>
<div class="t" style="left:57.5px;top:870.3100000000001px;font-size:10.5px;line-height:10.5px;color:#4a4a4a;font-weight:normal;">5</div>
<div class="t" style="left:57.5px;top:879.71px;font-size:10.5px;line-height:10.5px;color:#4a4a4a;font-weight:normal;">0</div>
<div class="t" style="left:57.5px;top:945.145px;font-size:10.5px;line-height:10.5px;color:#4a4a4a;font-weight:normal;">1</div>
<div class="t" style="left:57.5px;top:954.545px;font-size:10.5px;line-height:10.5px;color:#4a4a4a;font-weight:normal;">7</div>
<div class="t" style="left:57.5px;top:963.9449999999999px;font-size:10.5px;line-height:10.5px;color:#4a4a4a;font-weight:normal;">5</div>
<div class="t" style="left:57.5px;top:1029.38px;font-size:10.5px;line-height:10.5px;color:#4a4a4a;font-weight:normal;">2</div>
<div class="t" style="left:57.5px;top:1038.7800000000002px;font-size:10.5px;line-height:10.5px;color:#4a4a4a;font-weight:normal;">0</div>
<div class="t" style="left:57.5px;top:1048.18px;font-size:10.5px;line-height:10.5px;color:#4a4a4a;font-weight:normal;">0</div>
<div class="t" style="left:57.5px;top:1113.615px;font-size:10.5px;line-height:10.5px;color:#4a4a4a;font-weight:normal;">2</div>
<div class="t" style="left:57.5px;top:1123.015px;font-size:10.5px;line-height:10.5px;color:#4a4a4a;font-weight:normal;">2</div>
<div class="t" style="left:57.5px;top:1132.415px;font-size:10.5px;line-height:10.5px;color:#4a4a4a;font-weight:normal;">5</div>
<div class="a" style="left:52px;top:324px;width:18px;height:26px;background:#f3f1f0;border:1px solid #dcd9d7;border-radius:4px"></div>
<svg class="a" style="left:54px;top:329px;" width="14" height="15" viewBox="0 0 14 15"><path d="M3.5 7 V4.5 A3.5 3.5 0 0 1 10.5 4.5 V7" fill="none" stroke="#333" stroke-width="1.6"/><rect x="1.5" y="7" width="11" height="7.5" rx="1" fill="#e6c23a" stroke="#333" stroke-width="1.2"/><rect x="6.3" y="9" width="1.6" height="3" fill="#222"/></svg>
<div class="a" style="left:5px;top:401px;width:40px;height:1px;background:#dedad8"></div>
<div class="a" style="left:5px;top:583px;width:40px;height:1px;background:#dedad8"></div>
<div class="a" style="left:5px;top:732px;width:40px;height:1px;background:#dedad8"></div>
<div class="a" style="left:5px;top:879px;width:40px;height:1px;background:#dedad8"></div>
<div class="a" style="left:5px;top:1027px;width:40px;height:1px;background:#dedad8"></div>
<div class="a" style="left:4px;top:328px;width:42px;height:32px;background:#d6d2d0;border-radius:6px"></div>
<svg class="a" style="left:13.0px;top:331.0px;" width="24" height="24" viewBox="0 0 24 24"><path d="M8 4 L8 20 L11.5 16.5 L14 22 L16.5 21 L14 15.5 L19 15.5 Z" fill="#111"/></svg>
<svg class="a" style="left:13.0px;top:366.0px;" width="24" height="24" viewBox="0 0 24 24"><path d="M6 17 C6 9 10 6 19 5" fill="none" stroke="#6b6be0" stroke-width="1.2"/><rect x="3.5" y="15.5" width="4" height="4" fill="#fff" stroke="#5a5ad8" stroke-width="1.2"/><rect x="6" y="7" width="5.5" height="5.5" fill="#3a3ad8"/><rect x="17" y="3" width="4" height="4" fill="#fff" stroke="#5a5ad8" stroke-width="1.2"/><path d="M10.5 10 L20 17.5 L15.5 17 L13.5 21 Z" fill="#111"/></svg>
<svg class="a" style="left:13.0px;top:413.0px;" width="24" height="24" viewBox="0 0 24 24"><defs><linearGradient id="gr1" x1="0" y1="0" x2="1" y2="1"><stop offset="0" stop-color="#f7f9fc"/><stop offset="1" stop-color="#8fa9c6"/></linearGradient></defs><rect x="2.5" y="2.5" width="19" height="19" fill="url(#gr1)" stroke="#111" stroke-width="1.4"/></svg>
<svg class="a" style="left:13.0px;top:446.0px;" width="24" height="24" viewBox="0 0 24 24"><defs><radialGradient id="gr2" cx=".4" cy=".3" r=".75"><stop offset="0" stop-color="#fdf5f7"/><stop offset="1" stop-color="#f08aa6"/></radialGradient></defs><circle cx="12" cy="12" r="9.5" fill="url(#gr2)" stroke="#222" stroke-width="1.3"/></svg>
<svg class="a" style="left:13.0px;top:480.0px;" width="24" height="24" viewBox="0 0 24 24"><path d="M1.5 8 L8 2.5 L14 5.5 L13 13 L4.5 14.5 Z" fill="#f5f0b4" stroke="#333" stroke-width="1.1"/><path d="M13.5 6.5 L15.5 11.5 L21.5 12 L17 15.5 L18.5 21.5 L13.5 18.5 L8.5 21 L10 15.5 L6 12 L11.5 11.5 Z" fill="#f4eb8a" stroke="#333" stroke-width="1.1"/></svg>
<svg class="a" style="left:13.0px;top:514.0px;" width="24" height="24" viewBox="0 0 24 24"><defs><linearGradient id="gr5" x1="0" y1="0" x2="1" y2="0"><stop offset="0" stop-color="#7f82c0"/><stop offset="1" stop-color="#c4c6ee"/></linearGradient></defs><path d="M12 1.5 L21.5 6.5 V17.5 L12 22.5 L2.5 17.5 V6.5 Z" fill="url(#gr5)" stroke="#555" stroke-width="1.1"/><path d="M12 12 L21.5 6.5 V17.5 L12 22.5 Z" fill="#e4e4f8" opacity=".8"/><path d="M2.5 17.5 L12 12 L21.5 17.5 L12 22.5 Z" fill="#3e3f8a"/></svg>
<svg class="a" style="left:12.0px;top:546.0px;" width="26" height="26" viewBox="0 0 26 26"><path d="M12.50 13.00 L12.42 12.93 L12.35 12.84 L12.29 12.73 L12.25 12.60 L12.23 12.46 L12.24 12.32 L12.27 12.16 L12.32 12.01 L12.40 11.85 L12.51 11.71 L12.65 11.57 L12.81 11.45 L12.99 11.35 L13.20 11.28 L13.42 11.23 L13.65 11.21 L13.90 11.22 L14.15 11.27 L14.40 11.36 L14.65 11.49 L14.88 11.65 L15.10 11.85 L15.31 12.08 L15.48 12.35 L15.62 12.65 L15.73 12.97 L15.80 13.32 L15.83 13.68 L15.81 14.05 L15.74 14.42 L15.62 14.80 L15.46 15.16 L15.24 15.51 L14.98 15.84 L14.67 16.14 L14.32 16.40 L13.93 16.63 L13.51 16.80 L13.06 16.92 L12.59 16.99 L12.10 17.00 L11.61 16.94 L11.12 16.82 L10.63 16.63 L10.17 16.38 L9.73 16.07 L9.32 15.70 L8.95 15.27 L8.63 14.79 L8.37 14.26 L8.17 13.70 L8.04 13.11 L7.98 12.49 L7.99 11.86 L8.08 11.22 L8.25 10.59 L8.49 9.98 L8.82 9.39 L9.21 8.84 L9.68 8.34 L10.21 7.89 L10.80 7.50 L11.44 7.19 L12.12 6.95 L12.84 6.80 L13.58 6.74 L14.33 6.77 L15.08 6.90 L15.83 7.12 L16.54 7.43 L17.23 7.84 L17.87 8.34 L18.45 8.91 L18.97 9.57 L19.41 10.29 L19.76 11.07 L20.03 11.90 L20.19 12.77 L20.25 13.66 L20.21 14.56 L20.05 15.46 L19.79 16.35 L19.42 17.20 L18.94 18.01 L18.37 18.77 L17.70 19.45 L16.95 20.06 L16.12 20.57 L15.23 20.98 L14.29 21.29 L13.30 21.47 L12.30 21.53 L11.28 21.47 L10.27 21.28 L9.27 20.97 L8.32 20.53 L7.41 19.97 L6.57 19.29 L5.80 18.51 L5.13 17.63 L4.57 16.67 L4.11 15.63 L3.78 14.54 L3.58 13.40 L3.52 12.24 L3.59 11.06 L3.81 9.90 L4.16 8.76 L4.65 7.66 L5.27 6.62 L6.02 5.65 L6.89 4.78 L7.85 4.02 L8.92 3.37 L10.05 2.86 L11.26 2.48 L12.50 2.26 L13.78 2.19 L15.06 2.28 L16.34 2.52" fill="none" stroke="#1a1a1a" stroke-width="1.4"/></svg>
<svg class="a" style="left:13.0px;top:595.0px;" width="24" height="24" viewBox="0 0 24 24"><path d="M2 3 H11 C9 6 8 14 11 21" fill="none" stroke="#222" stroke-width="1"/><path d="M2 3 C6 8 7 16 11 21" fill="none" stroke="#222" stroke-width="1"/><rect x="1" y="19" width="3.5" height="3.5" fill="#fff" stroke="#222" stroke-width="1"/><path d="M4.5 21 H11" stroke="#222"/><path d="M11 21 L12 16 L15.5 12 L18 14 L14 18 Z" fill="#f2e0a0" stroke="#222" stroke-width=".9"/><path d="M15 12.5 L19 4 L23 6.5 L18 14 Z" fill="#5b9bd5" stroke="#223" stroke-width="1"/></svg>
<svg class="a" style="left:13.0px;top:627.0px;" width="24" height="24" viewBox="0 0 24 24"><path d="M3 3 C7 1 8 5 5 8 C3 10 4 11 5 13 C7 17 6 20 9 22 C14 23 17 20 20 18" fill="none" stroke="#222" stroke-width="1.1"/><path d="M10 21 L10 15 L17 3.5 L22 6.5 L15 18 Z" fill="#f2c23a" stroke="#222" stroke-width="1"/><path d="M10 21 L10 15 L15 18 Z" fill="#fbeec8" stroke="#222" stroke-width=".8"/></svg>
<svg class="a" style="left:13.0px;top:662.0px;" width="24" height="24" viewBox="0 0 24 24"><path d="M2 3 C8 1 7 8 6 12 C5 17 8 21 14 22 C16 22 19 21 21 20 C16 21 11 20 10 16 C9 12 12 6 9 2 Z" fill="#111"/><path d="M12 20 L11.5 13 L16.5 7 L21 10 L16 17 Z" fill="#f4dc70" stroke="#222" stroke-width="1"/><path d="M16 6 L18.5 2 L23 4.5 L21 9 Z" fill="#5b8fd0" stroke="#223" stroke-width=".8"/><path d="M16 6 L21 9.5" stroke="#7a2030" stroke-width="1.5"/></svg>
<svg class="a" style="left:13.0px;top:696.0px;" width="24" height="24" viewBox="0 0 24 24"><text x="0.5" y="21" font-family="Liberation Sans" font-weight="bold" font-size="24" fill="#111" style="letter-spacing:-1px">A</text><path d="M19.5 2 V22 M17.5 2 H21.5 M17.5 22 H21.5" stroke="#333" stroke-width="1"/></svg>
<svg class="a" style="left:13.0px;top:742.0px;" width="24" height="24" viewBox="0 0 24 24"><defs><linearGradient id="gr3" x1="0" y1="0" x2="1" y2="1"><stop offset="0" stop-color="#3aa05a"/><stop offset=".4" stop-color="#e8f6ea"/><stop offset="1" stop-color="#3e9a5a"/></linearGradient></defs><rect x="2" y="2" width="20" height="20" fill="url(#gr3)"/><path d="M5.5 5.5 L17.5 16.5" stroke="#222" stroke-width="1.3"/><circle cx="5.5" cy="5.5" r="2.2" fill="#fff" stroke="#222" stroke-width="1.3"/><circle cx="17.5" cy="16.5" r="2.2" fill="#fff" stroke="#222" stroke-width="1.3"/></svg>
<svg class="a" style="left:13.0px;top:776.0px;" width="24" height="24" viewBox="0 0 24 24"><path d="M4 4 C10 3 14 5 20 4 L19 20 C13 21 9 19 4 20 Z" fill="#5aa59a"/><rect x="2" y="2" width="4.5" height="4.5" fill="#fff" stroke="#111" stroke-width="1.3"/><rect x="17.5" y="2" width="4.5" height="4.5" fill="#fff" stroke="#111" stroke-width="1.3"/><rect x="17.5" y="17.5" width="4.5" height="4.5" fill="#fff" stroke="#111" stroke-width="1.3"/><rect x="2" y="17.5" width="4.5" height="4.5" fill="#fff" stroke="#111" stroke-width="1.3"/></svg>
<svg class="a" style="left:13.0px;top:809.0px;" width="24" height="24" viewBox="0 0 24 24"><path d="M17 2.5 C20 1.5 23 4 21.5 7 L19.5 9 L15 4.5 Z" fill="#111"/><path d="M14 4 L20 10 L18.5 11.5 L12.5 5.5 Z" fill="#111"/><path d="M14 7 L5.5 15.5 L5 18 L7 17.5 L16.5 9.5" fill="#eef3f8" stroke="#222" stroke-width="1"/><path d="M5 18 C4 19.5 3.5 21 4.5 21.5 C5.5 22 6 20 5 18" fill="#cde" stroke="#334" stroke-width=".9"/></svg>
<svg class="a" style="left:13.0px;top:843.0px;" width="24" height="24" viewBox="0 0 24 24"><ellipse cx="11" cy="20.5" rx="9" ry="2.3" fill="#cfe8cf" stroke="#222" stroke-width="1"/><path d="M5 10 L15.5 4.5 L21 13 L11 18.5 Z" fill="#6a9cce" stroke="#222" stroke-width="1.1"/><path d="M5 10 C3.5 12.5 5 17 10.5 18.5" fill="#a8d8a8" stroke="#222" stroke-width=".9"/><path d="M8 4 C9 2 11 2 11.5 4 L13 10" fill="none" stroke="#222" stroke-width=".9"/></svg>
<svg class="a" style="left:13.0px;top:891.0px;" width="24" height="24" viewBox="0 0 24 24"><defs><linearGradient id="gr4" x1="0" y1="0" x2="0" y2="1"><stop offset="0" stop-color="#666"/><stop offset="1" stop-color="#d4d4d4"/></linearGradient></defs><path d="M3 22 V13 C4 12 6 12 7 10 C9 5 12 2 16 2 C19 2 21 4 21 6 C19 4 15 5 15 8 C15 11 18 12 21 12 V22 Z" fill="url(#gr4)"/><path d="M16 4 C14 5 13 7 14 9" fill="none" stroke="#fff" stroke-width=".8"/></svg>
<svg class="a" style="left:13.0px;top:925.0px;" width="24" height="24" viewBox="0 0 24 24"><path d="M12 10 H19 L21.5 21 L15 21.5 L11.5 16 Z" fill="#5fb040" stroke="#222" stroke-width="1"/><path d="M14 7 V5 A2.5 2.5 0 0 1 18 5 V10" fill="#fff" stroke="#222" stroke-width="1"/><g fill="#111"><circle cx="3" cy="3" r="1.1"/><circle cx="6" cy="4" r="1.1"/><circle cx="9" cy="5.5" r="1.1"/><circle cx="4" cy="7" r="1.1"/><circle cx="7.5" cy="8" r="1.1"/><circle cx="4" cy="11" r="1.2"/></g></svg>
<svg class="a" style="left:13.0px;top:958.0px;" width="24" height="24" viewBox="0 0 24 24"><defs><linearGradient id="gr6" x1="0" y1="0" x2="0" y2="1"><stop offset="0" stop-color="#f6a99a"/><stop offset=".5" stop-color="#e8b0b8"/><stop offset=".55" stop-color="#4040d0"/><stop offset="1" stop-color="#2424a8"/></linearGradient></defs><path d="M10 2 L20.5 6.5 L14 20 L3.5 15.5 Z" fill="url(#gr6)" stroke="#222" stroke-width="1"/><path d="M1 21.5 H7 M17 21.5 H23" stroke="#777" stroke-width="1.6"/></svg>
<svg class="a" style="left:13.0px;top:992.0px;" width="24" height="24" viewBox="0 0 24 24"><rect x="7.5" y="1.5" width="7" height="6" fill="#c4d8ee" stroke="#222" stroke-width="1.1"/><rect x="11" y="10" width="7" height="4" fill="#f4dc7a" stroke="#222" stroke-width="1"/><rect x="1.5" y="16.5" width="7" height="6" fill="#c4d8ee" stroke="#222" stroke-width="1.1"/><rect x="15.5" y="16.5" width="7" height="6" fill="#c4d8ee" stroke="#222" stroke-width="1.1"/><path d="M14.5 4.5 H17 C19 4.5 19 6 19 8 V16.5 M7.5 7.5 L5 16.5" fill="none" stroke="#222" stroke-width="1"/></svg>
<svg class="a" style="left:13.0px;top:1039.0px;" width="24" height="24" viewBox="0 0 24 24"><circle cx="9.5" cy="9.5" r="7.5" fill="#e8f0f6" stroke="#222" stroke-width="1.5"/><path d="M15 15 L21.5 21.5" stroke="#222" stroke-width="4.5" stroke-linecap="round"/><path d="M15 15 L21.5 21.5" stroke="#e0c060" stroke-width="2.8" stroke-linecap="round"/></svg>
<svg class="a" style="left:13.0px;top:1072.0px;" width="24" height="24" viewBox="0 0 24 24"><path d="M2 8 L10.5 2 L22 17 L13.5 23 Z" fill="#f5d8cc" stroke="#222" stroke-width="1.2"/><path d="M6 8 L8 6.5 M8 11 L10 9.5 M10 13.5 L13 11.5 M12 16.5 L14 15 M14 19 L17 17" stroke="#444" stroke-width="1"/></svg>
<div class="a" style="left:70px;top:350px;width:1322px;height:790px;background:#fff"></div>
<svg class="a" style="left:70px;top:350px;overflow:hidden" width="1322" height="790" viewBox="0 0 1322 790"><path d="M580.5 790 V3.5 H1287.5 V790" fill="none" stroke="#8a8a8a" stroke-width="1"/><rect x="1288" y="4" width="3" height="786" fill="#6a6a6a"/><g transform="translate(-70 -350)"><path d="M467 765 C458 830 458 880 472 925 C487 972 507 1010 512 1060 C516 1095 514 1120 510 1142" fill="none" stroke="#00aa00" stroke-width="12.5"/><path d="M483 966 C455 945 425 915 395 909 C365 905 348 925 351 942 C355 958 385 967 420 968 C445 968 470 967 483 966 Z" fill="#55d400" stroke="#2a6a00" stroke-width="0.8"/><path d="M503 993 C520 965 550 925 583 913 C605 907 625 920 624 936 C622 955 595 968 560 980 C535 988 515 991 503 993 Z" fill="#55d400" stroke="#2a6a00" stroke-width="0.8"/></g><ellipse cx="0" cy="-89" rx="22.3" ry="61.2" transform="translate(420.1 343.79999999999995) rotate(0)" fill="#80b3ff" stroke="#000" stroke-width="1.6"/><ellipse cx="0" cy="-89" rx="22.3" ry="61.2" transform="translate(420.1 343.79999999999995) rotate(180)" fill="#80b3ff" stroke="#000" stroke-width="1.6"/><ellipse cx="0" cy="-89" rx="22.3" ry="61.2" transform="translate(420.1 343.79999999999995) rotate(90)" fill="#80b3ff" stroke="#000" stroke-width="1.6"/><ellipse cx="0" cy="-89" rx="22.3" ry="61.2" transform="translate(420.1 343.79999999999995) rotate(270)" fill="#80b3ff" stroke="#000" stroke-width="1.6"/><ellipse cx="0" cy="-89" rx="22.3" ry="61.2" transform="translate(420.1 343.79999999999995) rotate(30)" fill="#80b3ff" stroke="#000" stroke-width="1.6"/><ellipse cx="0" cy="-89" rx="22.3" ry="61.2" transform="translate(420.1 343.79999999999995) rotate(330)" fill="#80b3ff" stroke="#000" stroke-width="1.6"/><ellipse cx="0" cy="-89" rx="22.3" ry="61.2" transform="translate(420.1 343.79999999999995) rotate(150)" fill="#80b3ff" stroke="#000" stroke-width="1.6"/><ellipse cx="0" cy="-89" rx="22.3" ry="61.2" transform="translate(420.1 343.79999999999995) rotate(210)" fill="#80b3ff" stroke="#000" stroke-width="1.6"/><ellipse cx="0" cy="-89" rx="22.3" ry="61.2" transform="translate(420.1 343.79999999999995) rotate(60)" fill="#80b3ff" stroke="#000" stroke-width="1.6"/><ellipse cx="0" cy="-89" rx="22.3" ry="61.2" transform="translate(420.1 343.79999999999995) rotate(300)" fill="#80b3ff" stroke="#000" stroke-width="1.6"/><ellipse cx="0" cy="-89" rx="22.3" ry="61.2" transform="translate(420.1 343.79999999999995) rotate(120)" fill="#80b3ff" stroke="#000" stroke-width="1.6"/><ellipse cx="0" cy="-89" rx="22.3" ry="61.2" transform="translate(420.1 343.79999999999995) rotate(240)" fill="#80b3ff" stroke="#000" stroke-width="1.6"/><circle cx="420.1" cy="343.79999999999995" r="40.7" fill="#ff6600" stroke="#000" stroke-width="2.6"/><ellipse cx="909" cy="164.70000000000005" rx="34.6" ry="102" fill="#ffcc00" stroke="#000" stroke-width="3.5"/><ellipse cx="909" cy="487" rx="34.6" ry="102.3" fill="#ffcc00" stroke="#000" stroke-width="3.5"/><circle cx="909.6" cy="325.5" r="54.6" fill="#aa8800" stroke="#000" stroke-width="3.3"/><rect x="872.8" y="60.4" width="73" height="531" fill="none" stroke="#4a4a70" stroke-width="1" stroke-dasharray="4.3 3.2"/><path transform="translate(909 52.5) rotate(0) scale(1.0)" d="M0 -7 L4.5 -2.5 H2 V2.5 H4.5 L0 7 L-4.5 2.5 H-2 V-2.5 H-4.5 Z" fill="#000"/><path transform="translate(909 597.5) rotate(0) scale(1.0)" d="M0 -7 L4.5 -2.5 H2 V2.5 H4.5 L0 7 L-4.5 2.5 H-2 V-2.5 H-4.5 Z" fill="#000"/><path transform="translate(866.4 54.30000000000001) rotate(-45) scale(1.05)" d="M0 -7 L4.5 -2.5 H2 V2.5 H4.5 L0 7 L-4.5 2.5 H-2 V-2.5 H-4.5 Z" fill="#000"/><path transform="translate(951.4 54.30000000000001) rotate(45) scale(1.05)" d="M0 -7 L4.5 -2.5 H2 V2.5 H4.5 L0 7 L-4.5 2.5 H-2 V-2.5 H-4.5 Z" fill="#000"/><path transform="translate(866.4 597) rotate(45) scale(1.05)" d="M0 -7 L4.5 -2.5 H2 V2.5 H4.5 L0 7 L-4.5 2.5 H-2 V-2.5 H-4.5 Z" fill="#000"/><path transform="translate(951.4 597) rotate(-45) scale(1.05)" d="M0 -7 L4.5 -2.5 H2 V2.5 H4.5 L0 7 L-4.5 2.5 H-2 V-2.5 H-4.5 Z" fill="#000"/><path transform="translate(863.6 325.5) rotate(90) scale(0.85)" d="M0 -7 L4.5 -2.5 H2 V2.5 H4.5 L0 7 L-4.5 2.5 H-2 V-2.5 H-4.5 Z" fill="#5b6fd8"/><path transform="translate(953.5 325.5) rotate(90) scale(0.85)" d="M0 -7 L4.5 -2.5 H2 V2.5 H4.5 L0 7 L-4.5 2.5 H-2 V-2.5 H-4.5 Z" fill="#5b6fd8"/><path transform="translate(1033 763)" d="M0.5 0.5 V17 L4.3 13.3 L7 19.5 L9.5 18.5 L7 12.5 L12 12.5 Z" fill="#fff" stroke="#222" stroke-width="1"/></svg>
<div class="a" style="left:1391px;top:350px;width:18px;height:790px;background:#cfcdce"></div>
<div class="a" style="left:1394px;top:605px;width:10px;height:212px;background:#878787;border-radius:5px"></div>
<div class="a" style="left:1392px;top:324px;width:16px;height:25px;background:#f8f7f6;border:1px solid #cbc8c6;border-radius:4px"></div>
<svg class="a" style="left:1395px;top:329px;" width="10" height="14" viewBox="0 0 10 14"><path d="M3 4 L6 2 V12 M3 12 H8" fill="none" stroke="#777" stroke-width="1.1"/><rect x="1" y="1" width="8" height="12" fill="none" stroke="#bbb" stroke-width="0.8"/></svg>
<div class="a" style="left:70px;top:1140px;width:1321px;height:25px;background:#cfcdce"></div>
<div class="a" style="left:1130px;top:1149px;width:163px;height:9px;background:#878787;border-radius:5px"></div>
<div class="a" style="left:1391px;top:1141px;width:17px;height:24px;background:#f3f1f0;border:1px solid #dad6d4;border-radius:3px"></div>
<svg class="a" style="left:1392px;top:1144px;" width="16" height="17" viewBox="0 0 16 17"><defs><linearGradient id="cm1" x1="0" y1="0" x2="0" y2="1"><stop offset="0" stop-color="#1a9a40"/><stop offset=".45" stop-color="#40e090"/><stop offset=".8" stop-color="#3050e0"/><stop offset="1" stop-color="#2020a0"/></linearGradient><linearGradient id="cm2" x1="0" y1="0" x2="1" y2="0"><stop offset="0" stop-color="#fff" stop-opacity="0"/><stop offset=".6" stop-color="#d02060" stop-opacity=".2"/><stop offset="1" stop-color="#e02050"/></linearGradient></defs><path d="M3 2 C6 3 11 6 14.5 10.5 L5 15.5 C3 12 2 6 3 2 Z" fill="url(#cm1)" stroke="#222" stroke-width=".6"/><path d="M3 2 C6 3 11 6 14.5 10.5 L5 15.5 C3 12 2 6 3 2 Z" fill="url(#cm2)"/></svg>
<svg width="0" height="0" style="position:absolute"><defs><linearGradient id="lb" x1="0" y1="0" x2="1" y2="1"><stop offset="0" stop-color="#eef2f7"/><stop offset="1" stop-color="#aebdd0"/></linearGradient></defs></svg>
<div class="a" style="left:1409px;top:322px;width:12px;height:818px;background:#f7f3f2"></div>
<div class="a" style="left:1413.5px;top:738px;width:3px;height:3px;background:#444;border-radius:50%"></div>
<div class="a" style="left:1413.5px;top:743px;width:3px;height:3px;background:#444;border-radius:50%"></div>
<div class="a" style="left:1413.5px;top:748px;width:3px;height:3px;background:#444;border-radius:50%"></div>
<div class="a" style="left:1421px;top:340px;width:378px;height:811px;background:#fff;border:1px solid #d2cfcd"></div>
<div class="a" style="left:1421px;top:340px;width:378px;height:37px;background:#e4e1e0;border:1px solid #d2cfcd;border-bottom:1px solid #cfcbc9"></div>
<div class="a" style="left:1592px;top:341px;width:191px;height:35px;background:#ebe9e8"></div>
<div class="a" style="left:1592px;top:373px;width:191px;height:4px;background:#3584e4"></div>
<svg class="a" style="left:1441px;top:350px;" width="17" height="17" viewBox="0 0 17 17"><path d="M1 3 H12 L15 1 L16 2 L8 13 L1 15 Z" fill="#fff" stroke="#111" stroke-width="1.3"/><path d="M4 14 L14 4 L16 6 L8 15 Z" fill="#222"/></svg>
<div class="t" style="left:1460px;top:352.35px;font-size:14.3px;line-height:14.3px;color:#3c3c3c;font-weight:normal;">Fill and Stroke</div>
<svg class="a" style="left:1556px;top:353px;" width="11" height="11" viewBox="0 0 11 11"><path d="M2 2 L9 9 M9 2 L2 9" stroke="#b5b5b5" stroke-width="2"/></svg>
<svg class="a" style="left:1603px;top:350px;" width="17" height="17" viewBox="0 0 17 17"><path d="M1.5 0 V17" stroke="#c0202a" stroke-width="1.3"/><rect x="3.5" y="2.5" width="7" height="4" fill="#e8edf4" stroke="#333"/><rect x="3.5" y="7.5" width="12" height="4" fill="#dbe3ee" stroke="#333"/><rect x="3.5" y="12" width="9" height="4" fill="#e8edf4" stroke="#333"/></svg>
<div class="t" style="left:1621.5px;top:351.92px;font-size:14.8px;line-height:14.8px;color:#3c3c3c;font-weight:normal;">Align and Distribute</div>
<svg class="a" style="left:1758px;top:353px;" width="11" height="11" viewBox="0 0 11 11"><path d="M2 2 L9 9 M9 2 L2 9" stroke="#b5b5b5" stroke-width="2"/></svg>
<div class="t" style="left:1423px;top:383.18px;font-size:14.5px;line-height:14.5px;color:#2a2a2a;font-weight:bold;">Align</div>
<div class="t" style="left:1423px;top:514.17px;font-size:14.5px;line-height:14.5px;color:#2a2a2a;font-weight:bold;">Distribute</div>
<div class="t" style="left:1423px;top:610.17px;font-size:14.5px;line-height:14.5px;color:#2a2a2a;font-weight:bold;">Rearrange</div>
<div class="t" style="left:1423px;top:672.17px;font-size:14.5px;line-height:14.5px;color:#2a2a2a;font-weight:bold;">Remove overlaps</div>
<svg class="a" style="left:1441px;top:409px;" width="22" height="22" viewBox="0 0 22 22"><rect x="1.5" y="1.5" width="19" height="19" fill="none" stroke="#111" stroke-width="2" stroke-dasharray="2.2 1.6"/><rect x="6" y="6" width="10" height="9" fill="url(#lb)" stroke="#222"/></svg>
<div class="t" style="left:1535px;top:414.35px;font-size:14.3px;line-height:14.3px;color:#4a4a4a;font-weight:normal;">Relative to:</div>
<div class="a" style="left:1613px;top:404px;width:139px;height:34px;background:#f3f1f0;border:1px solid #d0ccca;border-radius:5px;box-shadow:0 1px 0 #dcd9d7"></div>
<div class="t" style="left:1625.5px;top:414.35px;font-size:14.3px;line-height:14.3px;color:#3a3a3a;font-weight:normal;">Last selected</div>
<svg class="a" style="left:1730px;top:415px;" width="12" height="8" viewBox="0 0 12 8"><path d="M0 0 H12 L6 7 Z" fill="#2a2a2a"/></svg>
<svg class="a" style="left:1764px;top:408px;" width="23" height="24" viewBox="0 0 23 24"><path d="M1.5 0 V24 M21.5 0 V24" stroke="#c0202a" stroke-width="1.4"/><path d="M1.5 4 H21.5" stroke="#222"/><rect x="6.5" y="6.5" width="11" height="6" fill="url(#lb)" stroke="#1e1e1e" stroke-width="1"/><rect x="5.5" y="13.5" width="13" height="6" fill="url(#lb)" stroke="#1e1e1e" stroke-width="1"/></svg>
<svg class="a" style="left:1545.0px;top:442.5px;" width="24" height="24" viewBox="0 0 24 24"><line x1="19.5" y1="0" x2="19.5" y2="24" stroke="#c0202a" stroke-width="1"/><rect x="1.5" y="6.5" width="18" height="5" fill="url(#lb)" stroke="#1e1e1e" stroke-width="1"/><rect x="11.5" y="11.5" width="8" height="4" fill="url(#lb)" stroke="#1e1e1e" stroke-width="1"/><rect x="6.5" y="16.5" width="13" height="5" fill="url(#lb)" stroke="#1e1e1e" stroke-width="1"/><rect x="19.5" y="1.5" width="4" height="4" fill="#f9d878" stroke="#e07a10" stroke-width="1"/></svg>
<svg class="a" style="left:1588.5px;top:442.5px;" width="24" height="24" viewBox="0 0 24 24"><line x1="1.5" y1="0" x2="1.5" y2="24" stroke="#c0202a" stroke-width="1"/><rect x="1.5" y="1.5" width="21" height="5" fill="url(#lb)" stroke="#1e1e1e" stroke-width="1"/><rect x="1.5" y="6.5" width="6" height="5" fill="url(#lb)" stroke="#1e1e1e" stroke-width="1"/><rect x="1.5" y="12.5" width="12" height="5" fill="url(#lb)" stroke="#1e1e1e" stroke-width="1"/><path d="M3 21.5 H15 M3 21.5 L6 19.5 M3 21.5 L6 23.5" stroke="#111" fill="none"/></svg>
<svg class="a" style="left:1631.5px;top:442.5px;" width="24" height="24" viewBox="0 0 24 24"><rect x="1.5" y="1.5" width="22" height="5" fill="url(#lb)" stroke="#1e1e1e" stroke-width="1"/><rect x="7.5" y="6.5" width="9" height="5" fill="url(#lb)" stroke="#1e1e1e" stroke-width="1"/><rect x="5.5" y="12.5" width="12" height="5" fill="url(#lb)" stroke="#1e1e1e" stroke-width="1"/><line x1="11.5" y1="0" x2="11.5" y2="24" stroke="#c0202a" stroke-width="1"/><line x1="12.5" y1="0" x2="12.5" y2="24" stroke="#c0202a" stroke-width="1"/><path d="M2 21.5 H10 M14 21.5 H22 M10 21.5 L8 19.5 M10 21.5 L8 23.5 M14 21.5 L16 19.5 M14 21.5 L16 23.5" stroke="#111" fill="none"/></svg>
<svg class="a" style="left:1676.5px;top:442.5px;" width="24" height="24" viewBox="0 0 24 24"><line x1="22.5" y1="0" x2="22.5" y2="24" stroke="#c0202a" stroke-width="1"/><rect x="1.5" y="1.5" width="21" height="5" fill="url(#lb)" stroke="#1e1e1e" stroke-width="1"/><rect x="16.5" y="6.5" width="6" height="5" fill="url(#lb)" stroke="#1e1e1e" stroke-width="1"/><rect x="10.5" y="12.5" width="12" height="5" fill="url(#lb)" stroke="#1e1e1e" stroke-width="1"/><path d="M9 21.5 H21 M21 21.5 L18 19.5 M21 21.5 L18 23.5" stroke="#111" fill="none"/></svg>
<svg class="a" style="left:1719.8px;top:442.5px;" width="24" height="24" viewBox="0 0 24 24"><line x1="6.5" y1="0" x2="6.5" y2="24" stroke="#c0202a" stroke-width="1"/><rect x="6.5" y="6.5" width="18" height="5" fill="url(#lb)" stroke="#1e1e1e" stroke-width="1"/><rect x="6.5" y="11.5" width="8" height="4" fill="url(#lb)" stroke="#1e1e1e" stroke-width="1"/><rect x="6.5" y="16.5" width="12" height="5" fill="url(#lb)" stroke="#1e1e1e" stroke-width="1"/><rect x="1.5" y="1.5" width="4" height="4" fill="#f9d878" stroke="#e07a10" stroke-width="1"/></svg>
<svg class="a" style="left:1763.0px;top:442.5px;" width="24" height="24" viewBox="0 0 24 24"><text x="7" y="9" font-family="Liberation Sans" font-weight="bold" font-size="11" fill="#445">a</text><text x="3" y="20" font-family="Liberation Serif" font-style="italic" font-size="20" fill="#111">y</text><line x1="7.5" y1="0" x2="7.5" y2="24" stroke="#222" stroke-width="1"/></svg>
<svg class="a" style="left:1545.0px;top:475.6px;" width="24" height="24" viewBox="0 0 24 24"><line x1="0" y1="17.5" x2="24" y2="17.5" stroke="#c0202a" stroke-width="1"/><rect x="1.5" y="5.5" width="5" height="12" fill="url(#lb)" stroke="#1e1e1e" stroke-width="1"/><rect x="9.5" y="11.5" width="5" height="6" fill="url(#lb)" stroke="#1e1e1e" stroke-width="1"/><rect x="13.5" y="0.5" width="5" height="17" fill="url(#lb)" stroke="#1e1e1e" stroke-width="1"/><rect x="19.5" y="19.5" width="4" height="4" fill="#f9d878" stroke="#e07a10" stroke-width="1"/></svg>
<svg class="a" style="left:1588.5px;top:475.6px;" width="24" height="24" viewBox="0 0 24 24"><line x1="0" y1="1.5" x2="24" y2="1.5" stroke="#c0202a" stroke-width="1"/><rect x="7.5" y="1.5" width="5" height="11" fill="url(#lb)" stroke="#1e1e1e" stroke-width="1"/><rect x="14.5" y="1.5" width="5" height="6" fill="url(#lb)" stroke="#1e1e1e" stroke-width="1"/><rect x="14.5" y="1.5" width="6" height="21" fill="url(#lb)" stroke="#1e1e1e" stroke-width="1"/><path d="M2.5 15 V3 M2.5 3 L0.5 6 M2.5 3 L4.5 6" stroke="#111" fill="none"/></svg>
<svg class="a" style="left:1631.5px;top:475.6px;" width="24" height="24" viewBox="0 0 24 24"><line x1="0" y1="11.5" x2="24" y2="11.5" stroke="#c0202a" stroke-width="1"/><rect x="7.5" y="5.5" width="5" height="12" fill="url(#lb)" stroke="#1e1e1e" stroke-width="1"/><rect x="13.5" y="8.5" width="5" height="6" fill="url(#lb)" stroke="#1e1e1e" stroke-width="1"/><rect x="16.5" y="1.5" width="6" height="21" fill="url(#lb)" stroke="#1e1e1e" stroke-width="1"/><path d="M2.5 2 V10 M2.5 14 V22 M2.5 10 L0.5 8 M2.5 10 L4.5 8 M2.5 14 L0.5 16 M2.5 14 L4.5 16" stroke="#111" fill="none"/></svg>
<svg class="a" style="left:1676.5px;top:475.6px;" width="24" height="24" viewBox="0 0 24 24"><line x1="0" y1="22.5" x2="24" y2="22.5" stroke="#c0202a" stroke-width="1"/><rect x="8.5" y="10.5" width="5" height="12" fill="url(#lb)" stroke="#1e1e1e" stroke-width="1"/><rect x="13.5" y="15.5" width="5" height="7" fill="url(#lb)" stroke="#1e1e1e" stroke-width="1"/><rect x="17.5" y="0.5" width="6" height="22" fill="url(#lb)" stroke="#1e1e1e" stroke-width="1"/><path d="M2.5 8 V20 M2.5 20 L0.5 17 M2.5 20 L4.5 17" stroke="#111" fill="none"/></svg>
<svg class="a" style="left:1719.8px;top:475.6px;" width="24" height="24" viewBox="0 0 24 24"><line x1="0" y1="6.5" x2="24" y2="6.5" stroke="#c0202a" stroke-width="1"/><rect x="1.5" y="6.5" width="5" height="12" fill="url(#lb)" stroke="#1e1e1e" stroke-width="1"/><rect x="8.5" y="6.5" width="5" height="6" fill="url(#lb)" stroke="#1e1e1e" stroke-width="1"/><rect x="11.5" y="6.5" width="6" height="17" fill="url(#lb)" stroke="#1e1e1e" stroke-width="1"/><rect x="18.5" y="1.5" width="4" height="4" fill="#f9d878" stroke="#e07a10" stroke-width="1"/></svg>
<svg class="a" style="left:1763.0px;top:475.6px;" width="24" height="24" viewBox="0 0 24 24"><text x="1" y="15" font-family="Liberation Serif" font-style="italic" font-size="20" fill="#111">y</text><text x="12" y="15" font-family="Liberation Sans" font-weight="bold" font-size="12" fill="#445">a</text><line x1="0" y1="15.5" x2="24" y2="15.5" stroke="#c0202a" stroke-width="1"/></svg>
<svg class="a" style="left:1588.5px;top:537.7px;" width="24" height="24" viewBox="0 0 24 24"><line x1="1.5" y1="0" x2="1.5" y2="6" stroke="#c0202a" stroke-width="1"/><line x1="10.5" y1="0" x2="10.5" y2="6" stroke="#c0202a" stroke-width="1"/><line x1="19.5" y1="0" x2="19.5" y2="8" stroke="#c0202a" stroke-width="1"/><path d="M2 1.5 H19" stroke="#111" stroke-width="1"/><rect x="1.5" y="7.5" width="5" height="10" fill="url(#lb)" stroke="#1e1e1e" stroke-width="1"/><rect x="10.5" y="6.5" width="5" height="16" fill="url(#lb)" stroke="#1e1e1e" stroke-width="1"/><rect x="18.5" y="9.5" width="4" height="12" fill="url(#lb)" stroke="#1e1e1e" stroke-width="1"/><line x1="1.5" y1="0" x2="1.5" y2="12" stroke="#c0202a" stroke-width="1"/><line x1="10.5" y1="0" x2="10.5" y2="10" stroke="#c0202a" stroke-width="1"/></svg>
<svg class="a" style="left:1631.5px;top:537.7px;" width="24" height="24" viewBox="0 0 24 24"><line x1="4.5" y1="0" x2="4.5" y2="8" stroke="#c0202a" stroke-width="1"/><line x1="12.5" y1="0" x2="12.5" y2="8" stroke="#c0202a" stroke-width="1"/><line x1="20.5" y1="0" x2="20.5" y2="9" stroke="#c0202a" stroke-width="1"/><path d="M4 1.5 H20" stroke="#111" stroke-width="1"/><rect x="1.5" y="7.5" width="6" height="10" fill="url(#lb)" stroke="#1e1e1e" stroke-width="1"/><rect x="9.5" y="6.5" width="6" height="16" fill="url(#lb)" stroke="#1e1e1e" stroke-width="1"/><rect x="18.5" y="9.5" width="4" height="12" fill="url(#lb)" stroke="#1e1e1e" stroke-width="1"/><line x1="4.5" y1="0" x2="4.5" y2="12" stroke="#c0202a" stroke-width="1"/><line x1="12.5" y1="0" x2="12.5" y2="12" stroke="#c0202a" stroke-width="1"/></svg>
<svg class="a" style="left:1676.5px;top:537.7px;" width="24" height="24" viewBox="0 0 24 24"><line x1="6.5" y1="0" x2="6.5" y2="8" stroke="#c0202a" stroke-width="1"/><line x1="14.5" y1="0" x2="14.5" y2="8" stroke="#c0202a" stroke-width="1"/><line x1="22.5" y1="0" x2="22.5" y2="9" stroke="#c0202a" stroke-width="1"/><path d="M6 1.5 H22" stroke="#111" stroke-width="1"/><rect x="1.5" y="9.5" width="4" height="12" fill="url(#lb)" stroke="#1e1e1e" stroke-width="1"/><rect x="8.5" y="6.5" width="6" height="16" fill="url(#lb)" stroke="#1e1e1e" stroke-width="1"/><rect x="17.5" y="7.5" width="5" height="10" fill="url(#lb)" stroke="#1e1e1e" stroke-width="1"/><line x1="14.5" y1="0" x2="14.5" y2="12" stroke="#c0202a" stroke-width="1"/></svg>
<svg class="a" style="left:1719.8px;top:537.7px;" width="24" height="24" viewBox="0 0 24 24"><line x1="4.5" y1="0" x2="4.5" y2="6" stroke="#c0202a" stroke-width="1"/><line x1="12.5" y1="0" x2="12.5" y2="6" stroke="#c0202a" stroke-width="1"/><line x1="19.5" y1="0" x2="19.5" y2="6" stroke="#c0202a" stroke-width="1"/><path d="M4 1.5 H19" stroke="#111" stroke-width="1"/><rect x="1.5" y="6.5" width="3" height="15" fill="url(#lb)" stroke="#1e1e1e" stroke-width="1"/><rect x="10.5" y="1.5" width="4" height="15" fill="url(#lb)" stroke="#1e1e1e" stroke-width="1"/><rect x="19.5" y="5.5" width="4" height="18" fill="url(#lb)" stroke="#1e1e1e" stroke-width="1"/><line x1="12.5" y1="1" x2="12.5" y2="10" stroke="#f3a0a0" stroke-width="2"/></svg>
<svg class="a" style="left:1763.0px;top:537.7px;" width="24" height="24" viewBox="0 0 24 24"><line x1="1.5" y1="0" x2="1.5" y2="24" stroke="#c0202a" stroke-width="1"/><line x1="14.5" y1="0" x2="14.5" y2="24" stroke="#c0202a" stroke-width="1"/><path d="M2 1.5 H14" stroke="#111" stroke-width="1"/><text x="1" y="16" font-family="Liberation Sans" font-weight="bold" font-size="11" fill="#6a82aa">a</text><text x="11" y="19" font-family="Liberation Serif" font-style="italic" font-size="18" fill="#111">y</text></svg>
<svg class="a" style="left:1588.5px;top:571.8px;" width="24" height="24" viewBox="0 0 24 24"><line x1="0" y1="1.5" x2="8" y2="1.5" stroke="#c0202a" stroke-width="1"/><line x1="0" y1="10.5" x2="8" y2="10.5" stroke="#c0202a" stroke-width="1"/><line x1="0" y1="18.5" x2="10" y2="18.5" stroke="#c0202a" stroke-width="1"/><path d="M1.5 2 V18" stroke="#111" stroke-width="1"/><rect x="7.5" y="1.5" width="10" height="5" fill="url(#lb)" stroke="#1e1e1e" stroke-width="1"/><rect x="6.5" y="9.5" width="16" height="5" fill="url(#lb)" stroke="#1e1e1e" stroke-width="1"/><rect x="9.5" y="18.5" width="12" height="4" fill="url(#lb)" stroke="#1e1e1e" stroke-width="1"/></svg>
<svg class="a" style="left:1631.5px;top:571.8px;" width="24" height="24" viewBox="0 0 24 24"><line x1="0" y1="3.5" x2="8" y2="3.5" stroke="#c0202a" stroke-width="1"/><line x1="0" y1="12.5" x2="8" y2="12.5" stroke="#c0202a" stroke-width="1"/><line x1="0" y1="21.5" x2="10" y2="21.5" stroke="#c0202a" stroke-width="1"/><path d="M1.5 3 V21" stroke="#111" stroke-width="1"/><rect x="7.5" y="1.5" width="10" height="5" fill="url(#lb)" stroke="#1e1e1e" stroke-width="1"/><rect x="6.5" y="9.5" width="16" height="5" fill="url(#lb)" stroke="#1e1e1e" stroke-width="1"/><rect x="9.5" y="18.5" width="12" height="4" fill="url(#lb)" stroke="#1e1e1e" stroke-width="1"/></svg>
<svg class="a" style="left:1676.5px;top:571.8px;" width="24" height="24" viewBox="0 0 24 24"><line x1="0" y1="5.5" x2="8" y2="5.5" stroke="#c0202a" stroke-width="1"/><line x1="0" y1="13.5" x2="8" y2="13.5" stroke="#c0202a" stroke-width="1"/><line x1="0" y1="22.5" x2="10" y2="22.5" stroke="#c0202a" stroke-width="1"/><path d="M1.5 5 V22" stroke="#111" stroke-width="1"/><rect x="9.5" y="1.5" width="12" height="4" fill="url(#lb)" stroke="#1e1e1e" stroke-width="1"/><rect x="6.5" y="8.5" width="16" height="5" fill="url(#lb)" stroke="#1e1e1e" stroke-width="1"/><rect x="7.5" y="17.5" width="10" height="5" fill="url(#lb)" stroke="#1e1e1e" stroke-width="1"/></svg>
<svg class="a" style="left:1719.8px;top:571.8px;" width="24" height="24" viewBox="0 0 24 24"><line x1="0" y1="1.5" x2="8" y2="1.5" stroke="#c0202a" stroke-width="1"/><line x1="0" y1="11.5" x2="10" y2="11.5" stroke="#c0202a" stroke-width="1"/><line x1="0" y1="20.5" x2="8" y2="20.5" stroke="#c0202a" stroke-width="1"/><path d="M1.5 2 V20" stroke="#111" stroke-width="1"/><rect x="6.5" y="0.5" width="15" height="3" fill="url(#lb)" stroke="#1e1e1e" stroke-width="1"/><rect x="9.5" y="10.5" width="10" height="3" fill="url(#lb)" stroke="#1e1e1e" stroke-width="1"/><rect x="5.5" y="20.5" width="18" height="3" fill="url(#lb)" stroke="#1e1e1e" stroke-width="1"/></svg>
<svg class="a" style="left:1763.0px;top:571.8px;" width="24" height="24" viewBox="0 0 24 24"><line x1="0" y1="8.5" x2="24" y2="8.5" stroke="#c0202a" stroke-width="1"/><line x1="0" y1="22.5" x2="24" y2="22.5" stroke="#c0202a" stroke-width="1"/><path d="M2.5 9 V22" stroke="#111" stroke-width="1"/><text x="11" y="9" font-family="Liberation Serif" font-style="italic" font-size="17" fill="#111">y</text><text x="12" y="22" font-family="Liberation Sans" font-weight="bold" font-size="11" fill="#6a82aa">a</text></svg>
<svg class="a" style="left:1545.0px;top:633.7px;" width="24" height="24" viewBox="0 0 24 24"><g stroke="#3a3ad8" fill="#dfe4ff" stroke-width="1.2"><path d="M2 7 L7 2 L12 9 L20 9 L23 3 M20 9 L22 16 M12 9 L9 17 L3 15 L2 7" fill="none"/><circle cx="2" cy="7" r="1.8"/><circle cx="7" cy="2" r="1.8"/><circle cx="12" cy="9" r="1.8"/><circle cx="20" cy="9" r="1.8"/><circle cx="23" cy="3" r="1.8"/><circle cx="22" cy="16" r="1.8"/><circle cx="9" cy="17" r="1.8"/><circle cx="3" cy="15" r="1.8"/></g></svg>
<svg class="a" style="left:1589.3px;top:633.7px;" width="24" height="24" viewBox="0 0 24 24"><rect x="1.5" y="1.5" width="7" height="8" fill="url(#lb)" stroke="#1e1e1e" stroke-width="1"/><rect x="13.5" y="11.5" width="9" height="10" fill="url(#lb)" stroke="#1e1e1e" stroke-width="1"/><path d="M11 3 C16 3 17 6 17 10 M11 19 C5 19 5 16 5 11" fill="none" stroke="#111" stroke-width="1.2"/></svg>
<svg class="a" style="left:1631.6px;top:633.7px;" width="24" height="24" viewBox="0 0 24 24"><rect x="1.5" y="1.5" width="6" height="7" fill="url(#lb)" stroke="#1e1e1e" stroke-width="1"/><rect x="13.5" y="7.5" width="8" height="8" fill="url(#lb)" stroke="#1e1e1e" stroke-width="1"/><path d="M5 9 C5 12 8 11 12 11 M10 4 C15 4 17 5 17 7" fill="none" stroke="#111"/><path d="M1 17 H10 M3 19 H11 M2 21 H12" stroke="#a01010" stroke-width="1.5"/></svg>
<svg class="a" style="left:1676.5px;top:633.7px;" width="24" height="24" viewBox="0 0 24 24"><rect x="1.5" y="1.5" width="6" height="7" fill="url(#lb)" stroke="#1e1e1e" stroke-width="1"/><rect x="13.5" y="7.5" width="8" height="8" fill="url(#lb)" stroke="#1e1e1e" stroke-width="1"/><path d="M10 4 C15 4 17 5 17 7" fill="none" stroke="#111"/><circle cx="7" cy="16" r="4.5" fill="none" stroke="#c02020" stroke-dasharray="1.5 1.2"/></svg>
<svg class="a" style="left:1719.8px;top:633.7px;" width="24" height="24" viewBox="0 0 24 24"><rect x="1.5" y="4.5" width="4" height="4" fill="#f9d878" stroke="#e07a10" stroke-width="1"/><rect x="13.5" y="0.5" width="4" height="4" fill="#f9d878" stroke="#e07a10" stroke-width="1"/><rect x="17.5" y="9.5" width="4" height="4" fill="#f9d878" stroke="#e07a10" stroke-width="1"/><rect x="10.5" y="11.5" width="4" height="4" fill="#f9d878" stroke="#e07a10" stroke-width="1"/><rect x="1.5" y="18.5" width="4" height="4" fill="#f9d878" stroke="#e07a10" stroke-width="1"/><rect x="13.5" y="17.5" width="4" height="4" fill="#f9d878" stroke="#e07a10" stroke-width="1"/></svg>
<svg class="a" style="left:1763.0px;top:633.7px;" width="24" height="24" viewBox="0 0 24 24"><rect x="1.5" y="7.5" width="8" height="7" fill="#f9d878" stroke="#e07a10" stroke-width="1"/><rect x="18.5" y="2.5" width="4" height="5" fill="#f9d878" stroke="#e07a10" stroke-width="1"/><rect x="18.5" y="18.5" width="4" height="4" fill="#f9d878" stroke="#e07a10" stroke-width="1"/><line x1="10" y1="9" x2="18" y2="5" stroke="#c0202a" stroke-width="1"/><line x1="10" y1="13" x2="18" y2="19" stroke="#c0202a" stroke-width="1"/><line x1="20.5" y1="8" x2="20.5" y2="18" stroke="#c0202a" stroke-width="1"/></svg>
<div class="t" style="left:1543.5px;top:702.85px;font-size:14.3px;line-height:14.3px;color:#4a4a4a;font-weight:normal;">H:</div>
<div class="t" style="left:1649px;top:702.85px;font-size:14.3px;line-height:14.3px;color:#4a4a4a;font-weight:normal;">V:</div>
<div class="a" style="left:1560px;top:693px;width:85px;height:32px;background:#fff;border:1px solid #d3cfcc;border-radius:5px"></div>
<div class="a" style="left:1612px;top:694px;width:1px;height:30px;background:#ebe8e6"></div>
<div class="a" style="left:1630px;top:694px;width:1px;height:30px;background:#ebe8e6"></div>
<div class="a" style="left:1614.5px;top:708.3px;width:13px;height:1.5px;background:#2b2b2b"></div>
<div class="a" style="left:1632.5px;top:708.3px;width:10px;height:1.5px;background:#2b2b2b"></div>
<div class="a" style="left:1636.75px;top:704.0px;width:1.5px;height:10px;background:#2b2b2b"></div>
<div class="t" style="left:1563px;top:702.10px;font-size:14px;line-height:14px;color:#1e1e1e;font-weight:normal;">0.0</div>
<div class="a" style="left:1664px;top:693px;width:86px;height:32px;background:#fff;border:1px solid #d3cfcc;border-radius:5px"></div>
<div class="a" style="left:1716px;top:694px;width:1px;height:30px;background:#ebe8e6"></div>
<div class="a" style="left:1734px;top:694px;width:1px;height:30px;background:#ebe8e6"></div>
<div class="a" style="left:1718.5px;top:708.3px;width:13px;height:1.5px;background:#2b2b2b"></div>
<div class="a" style="left:1736.5px;top:708.3px;width:11px;height:1.5px;background:#2b2b2b"></div>
<div class="a" style="left:1741.25px;top:703.5px;width:1.5px;height:11px;background:#2b2b2b"></div>
<div class="t" style="left:1667px;top:702.10px;font-size:14px;line-height:14px;color:#1e1e1e;font-weight:normal;">0.0</div>
<svg class="a" style="left:1763px;top:696px;" width="24" height="26" viewBox="0 0 24 26"><rect x="1.5" y="2.5" width="6" height="21" fill="url(#lb)" stroke="#1e1e1e" stroke-width="1"/><rect x="9.5" y="2.5" width="5" height="21" fill="url(#lb)" stroke="#1e1e1e" stroke-width="1"/><rect x="16.5" y="2.5" width="6" height="21" fill="url(#lb)" stroke="#1e1e1e" stroke-width="1"/></svg>
<div class="a" style="left:1818px;top:472px;width:39px;height:1px;background:#e2dfdd"></div>
<div class="a" style="left:1818px;top:555px;width:39px;height:1px;background:#e2dfdd"></div>
<div class="a" style="left:1818px;top:637.5px;width:39px;height:1px;background:#e2dfdd"></div>
<div class="a" style="left:1818px;top:756px;width:39px;height:1px;background:#e2dfdd"></div>
<div class="a" style="left:1818px;top:874.5px;width:39px;height:1px;background:#e2dfdd"></div>
<div class="a" style="left:1818px;top:957.5px;width:39px;height:1px;background:#e2dfdd"></div>
<div class="a" style="left:1862px;top:368px;width:36px;height:1px;background:#e2dfdd"></div>
<div class="a" style="left:1862px;top:555px;width:36px;height:1px;background:#e2dfdd"></div>
<div class="a" style="left:1862px;top:777px;width:36px;height:1px;background:#e2dfdd"></div>
<div class="a" style="left:1862px;top:929.5px;width:36px;height:1px;background:#e2dfdd"></div>
<svg class="a" style="left:1828.00px;top:336.20px;" width="17.60" height="17.60" viewBox="0 0 22 22"><path d="M4 2 H12 L17 7 V20 H4 Z" fill="#fff" stroke="#999" stroke-width="1"/><circle cx="15" cy="13" r="4.5" fill="#fff" stroke="#3a6fd0" stroke-width="1.4"/><path d="M15 10.5 V15.5 M12.5 13 H17.5" stroke="#3a6fd0" stroke-width="1.3"/></svg>
<svg class="a" style="left:1828.00px;top:371.20px;" width="17.60" height="17.60" viewBox="0 0 22 22"><path d="M2 5 H8 L10 7 H20 V19 H2 Z" fill="#cdb58e" stroke="#a08660" stroke-width="1"/><rect x="4" y="9" width="14" height="10" fill="#e6d4b2"/><path d="M8 11 H15 M8 13.5 H13" stroke="#7a6040" stroke-width="1"/></svg>
<svg class="a" style="left:1828.00px;top:405.70px;" width="17.60" height="17.60" viewBox="0 0 22 22"><path d="M3 12 V19 H19 V12" fill="#d8e6f6" stroke="#2f6ec0" stroke-width="1.5"/><rect x="3" y="16" width="16" height="3" fill="#3a7ad0"/><path d="M9 2 H13 V9 H16 L11 14 L6 9 H9 Z" fill="#fff" stroke="#333" stroke-width="1.1"/></svg>
<svg class="a" style="left:1828.00px;top:439.20px;" width="17.60" height="17.60" viewBox="0 0 22 22"><rect x="2" y="8" width="18" height="9" rx="2" fill="#666" stroke="#222"/><rect x="5" y="3" width="12" height="6" fill="#eee" stroke="#222"/><rect x="5" y="14" width="12" height="6" fill="#fff" stroke="#222"/></svg>
<svg class="a" style="left:1828.00px;top:488.20px;" width="17.60" height="17.60" viewBox="0 0 22 22"><path d="M8 2 H14 L19 7 V20 H8 V14" fill="#fff" stroke="#222" stroke-width="1.2"/><path d="M1 11 H12 M9 8 L12 11 L9 14" fill="none" stroke="#111" stroke-width="1.3"/></svg>
<svg class="a" style="left:1828.00px;top:522.70px;" width="17.60" height="17.60" viewBox="0 0 22 22"><path d="M3 2 H11 L16 7 V20 H3 Z" fill="#f3f3f3" stroke="#222" stroke-width="1.2"/><path d="M9 12 H21 M18 9 L21 12 L18 15" fill="none" stroke="#111" stroke-width="1.3"/></svg>
<svg class="a" style="left:1828.00px;top:570.20px;" width="17.60" height="17.60" viewBox="0 0 22 22"><path d="M6 9 H14 C18 9 19 12 19 13.5 C19 16 17 18 13 18 H9" fill="none" stroke="#d6b400" stroke-width="2.5"/><path d="M7 4 L2 9 L7 14" fill="none" stroke="#d6b400" stroke-width="2.5"/></svg>
<svg class="a" style="left:1828.00px;top:603.20px;opacity:0.6" width="17.60" height="17.60" viewBox="0 0 22 22"><path d="M16 9 H8 C4 9 3 12 3 13.5 C3 16 5 18 9 18 H13" fill="none" stroke="#ccc" stroke-width="2.5"/><path d="M15 4 L20 9 L15 14" fill="none" stroke="#ccc" stroke-width="2.5"/></svg>
<svg class="a" style="left:1828.00px;top:652.20px;" width="17.60" height="17.60" viewBox="0 0 22 22"><rect x="2" y="2" width="11" height="13" fill="#fff" stroke="#555"/><path d="M4 5 H10 M4 8 H10 M4 11 H8" stroke="#777"/><rect x="8" y="8" width="11" height="12" fill="#fff" stroke="#555"/><path d="M10 12 H17 M10 15 H17" stroke="#777"/></svg>
<svg class="a" style="left:1828.00px;top:688.70px;" width="17.60" height="17.60" viewBox="0 0 22 22"><path d="M5 2 L15 14 M17 2 L7 14" stroke="#777" stroke-width="1.6"/><circle cx="6" cy="17" r="3.8" fill="#e01e2a"/><circle cx="16" cy="17" r="3.8" fill="#e01e2a"/><circle cx="6" cy="17" r="1.5" fill="#fff"/><circle cx="16" cy="17" r="1.5" fill="#fff"/></svg>
<svg class="a" style="left:1828.00px;top:723.20px;" width="17.60" height="17.60" viewBox="0 0 22 22"><rect x="3" y="4" width="16" height="17" rx="1" fill="#d8b070" stroke="#8a6a30"/><rect x="7" y="2" width="8" height="4" fill="#eee" stroke="#666"/><rect x="7" y="8" width="10" height="11" fill="#fff" stroke="#777"/><path d="M9 11 H15 M9 14 H15" stroke="#888"/></svg>
<svg class="a" style="left:1828.00px;top:771.20px;" width="17.60" height="17.60" viewBox="0 0 22 22"><rect x="2" y="2" width="12" height="12" fill="#fff" stroke="#222" stroke-width="1.2"/><rect x="6" y="6" width="13" height="13" fill="url(#lb)" stroke="#222" stroke-width="1.2"/></svg>
<svg class="a" style="left:1828.00px;top:805.20px;" width="17.60" height="17.60" viewBox="0 0 22 22"><rect x="2" y="2" width="12" height="12" fill="#fff" stroke="#222" stroke-width="1.2"/><rect x="6" y="6" width="13" height="13" fill="#fff" stroke="#222" stroke-width="1.2"/><path d="M10 12 V10 A2.5 2.5 0 0 1 15 10 V12" fill="none" stroke="#222"/><rect x="9" y="12" width="7" height="5" fill="#e6c23a" stroke="#222"/></svg>
<svg class="a" style="left:1828.00px;top:840.20px;" width="17.60" height="17.60" viewBox="0 0 22 22"><rect x="2" y="2" width="12" height="12" fill="#fff" stroke="#222" stroke-width="1.2"/><rect x="6" y="6" width="13" height="13" fill="#fff" stroke="#222" stroke-width="1.2"/><path d="M10 12 V10 A2.5 2.5 0 0 1 15 10" fill="none" stroke="#222"/><rect x="9" y="12" width="7" height="5" fill="#fff" stroke="#222"/></svg>
<svg class="a" style="left:1828.00px;top:888.70px;" width="17.60" height="17.60" viewBox="0 0 22 22"><path d="M2 2 H5 M17 2 H20 M2 20 H5 M17 20 H20 M2 2 V5 M20 2 V5 M2 17 V20 M20 17 V20" stroke="#111" stroke-width="2"/><rect x="4" y="9" width="10" height="8" fill="#ddd" stroke="#333"/><circle cx="13" cy="8" r="4.5" fill="#cfd4e0" stroke="#333"/></svg>
<svg class="a" style="left:1828.00px;top:923.70px;" width="17.60" height="17.60" viewBox="0 0 22 22"><path d="M2 2 H5 M17 2 H20 M2 20 H5 M17 20 H20 M2 2 V5 M20 2 V5 M2 17 V20 M20 17 V20" stroke="#111" stroke-width="2"/><rect x="4" y="9" width="10" height="8" fill="#f0d060" stroke="#333"/><circle cx="13" cy="8" r="4.5" fill="#cfd4e0" stroke="#333"/></svg>
<svg class="a" style="left:1828.00px;top:973.20px;" width="17.60" height="17.60" viewBox="0 0 22 22"><path d="M2 3 H14 L18 1 L20 3 L10 17 L2 19 Z" fill="#fff" stroke="#111" stroke-width="1.4"/><path d="M4 18 L17 5 L20 8 L9 19 Z" fill="#222"/><path d="M14 6 L19 2" stroke="#f0e070" stroke-width="1.5"/></svg>
<svg class="a" style="left:1828.00px;top:1007.20px;" width="17.60" height="17.60" viewBox="0 0 22 22"><text x="2" y="19" font-family="Liberation Serif" font-weight="bold" font-size="22" fill="#111">T</text></svg>
<svg class="a" style="left:1828.00px;top:1042.20px;" width="17.60" height="17.60" viewBox="0 0 22 22"><path d="M3 14 L11 18 L19 14 M3 11 L11 15 L19 11" fill="none" stroke="#333" stroke-width="1.2"/><path d="M3 8 L11 4 L19 8 L11 12 Z" fill="#fff" stroke="#333" stroke-width="1.2"/></svg>
<svg class="a" style="left:1828.00px;top:1075.70px;" width="17.60" height="17.60" viewBox="0 0 22 22"><rect x="2" y="3" width="18" height="17" fill="#fff" stroke="#222" stroke-width="1.3"/><path d="M2 6.5 H20" stroke="#222" stroke-width="1.3"/><path d="M9 10 L6 13 L9 16 M13 10 L16 13 L13 16" fill="none" stroke="#222" stroke-width="1.2"/></svg>
<svg class="a" style="left:1832px;top:1139px;" width="8" height="13" viewBox="0 0 8 13"><path d="M0 0 L7 6.5 L0 13 Z" fill="#222"/></svg>
<div class="a" style="left:1862px;top:328px;width:36px;height:33px;background:#dad6d4;border-radius:6px"></div>
<div class="a" style="left:1862px;top:563px;width:36px;height:33px;background:#dad6d4;border-radius:6px"></div>
<div class="a" style="left:1862px;top:667px;width:36px;height:33px;background:#dad6d4;border-radius:6px"></div>
<div class="a" style="left:1862px;top:785px;width:36px;height:33px;background:#dad6d4;border-radius:6px"></div>
<div class="a" style="left:1862px;top:972px;width:36px;height:33px;background:#dad6d4;border-radius:6px"></div>
<div class="a" style="left:1862px;top:1006.5px;width:36px;height:33px;background:#dad6d4;border-radius:6px"></div>
<svg class="a" style="left:1870.70px;top:336.20px;" width="17.60" height="17.60" viewBox="0 0 22 22"><path d="M6 6 L16 15" stroke="#111" stroke-width="1.5"/><path d="M13 15 L17 16 L16 12 Z" fill="#111"/><rect x="3" y="3" width="5" height="5" transform="rotate(45 5.5 5.5)" fill="#fff" stroke="#3a3ad8" stroke-width="1.6"/><rect x="14.5" y="14.5" width="5" height="5" transform="rotate(45 17 17)" fill="#fff" stroke="#2a9a50" stroke-width="1.6"/></svg>
<svg class="a" style="left:1870.70px;top:384.20px;" width="17.60" height="17.60" viewBox="0 0 22 22"><path d="M6 6 L16 15" stroke="#111" stroke-width="1.5"/><path d="M13 15 L17 16 L16 12 Z" fill="#111"/><rect x="3" y="3" width="5" height="5" transform="rotate(45 5.5 5.5)" fill="#fff" stroke="#3a3ad8" stroke-width="1.6"/><rect x="14.5" y="14.5" width="5" height="5" transform="rotate(45 17 17)" fill="#fff" stroke="#2a9a50" stroke-width="1.6"/></svg>
<svg class="a" style="left:1870.70px;top:418.70px;opacity:0.35" width="17.60" height="17.60" viewBox="0 0 22 22"><path d="M4 18 H18 V4" fill="none" stroke="#aaa" stroke-dasharray="1.5 1.5"/><circle cx="11" cy="11" r="2" fill="#bbb"/></svg>
<svg class="a" style="left:1870.70px;top:452.20px;opacity:0.35" width="17.60" height="17.60" viewBox="0 0 22 22"><path d="M4 18 H18 V4" fill="none" stroke="#aaa" stroke-dasharray="1.5 1.5"/><circle cx="11" cy="11" r="2" fill="#bbb"/></svg>
<svg class="a" style="left:1870.70px;top:486.70px;opacity:0.35" width="17.60" height="17.60" viewBox="0 0 22 22"><path d="M4 18 H18 V4" fill="none" stroke="#aaa" stroke-dasharray="1.5 1.5"/><circle cx="11" cy="11" r="2" fill="#bbb"/></svg>
<svg class="a" style="left:1870.70px;top:519.70px;opacity:0.35" width="17.60" height="17.60" viewBox="0 0 22 22"><path d="M4 18 H18 V4" fill="none" stroke="#aaa" stroke-dasharray="1.5 1.5"/><circle cx="11" cy="11" r="2" fill="#bbb"/></svg>
<svg class="a" style="left:1870.70px;top:570.20px;" width="17.60" height="17.60" viewBox="0 0 22 22"><path d="M6 6 L16 15" stroke="#111" stroke-width="1.5"/><path d="M13 15 L17 16 L16 12 Z" fill="#111"/><rect x="3" y="3" width="5" height="5" transform="rotate(45 5.5 5.5)" fill="#fff" stroke="#3a3ad8" stroke-width="1.6"/><rect x="14.5" y="14.5" width="5" height="5" transform="rotate(45 17 17)" fill="#fff" stroke="#2a9a50" stroke-width="1.6"/></svg>
<svg class="a" style="left:1870.70px;top:604.70px;" width="17.60" height="17.60" viewBox="0 0 22 22"><path d="M4 4 C12 4 18 8 16 17" fill="none" stroke="#2a9a40" stroke-width="1.6"/><path d="M12 14 L16 18 L19 13" fill="none" stroke="#2a9a40" stroke-width="1.4"/></svg>
<svg class="a" style="left:1870.70px;top:639.70px;" width="17.60" height="17.60" viewBox="0 0 22 22"><path d="M2 18 L20 4 M3 10 L19 14" stroke="#222" stroke-width="1.2"/><rect x="8.5" y="8.5" width="4" height="4" transform="rotate(45 10.5 10.5)" fill="#fff" stroke="#2a9a50" stroke-width="1.5"/></svg>
<svg class="a" style="left:1870.70px;top:674.20px;" width="17.60" height="17.60" viewBox="0 0 22 22"><path d="M3 3 C11 3 18 8 15 15" fill="none" stroke="#333" stroke-width="1.2"/><rect x="10" y="12" width="5" height="5" transform="rotate(45 12.5 14.5)" fill="#fff" stroke="#2a9a50" stroke-width="1.5"/></svg>
<svg class="a" style="left:1870.70px;top:706.20px;" width="17.60" height="17.60" viewBox="0 0 22 22"><path d="M4 4 C8 6 12 8 12 12 C12 17 16 18 19 15" fill="none" stroke="#333" stroke-width="1.2"/><rect x="9.5" y="7" width="5" height="5" transform="rotate(45 12 9.5)" fill="#fff" stroke="#2a9a50" stroke-width="1.5"/></svg>
<svg class="a" style="left:1870.70px;top:743.70px;" width="17.60" height="17.60" viewBox="0 0 22 22"><path d="M2 19 L20 3" stroke="#c02020" stroke-width="1.2"/><path d="M4 13 L7 16 M8 10 L11 13 M13 6 L16 9" stroke="#c02020"/><circle cx="11" cy="11" r="2.2" fill="#fff" stroke="#2a9a50" stroke-width="1.4"/></svg>
<svg class="a" style="left:1870.70px;top:792.70px;" width="17.60" height="17.60" viewBox="0 0 22 22"><path d="M6 6 L16 15" stroke="#111" stroke-width="1.5"/><path d="M13 15 L17 16 L16 12 Z" fill="#111"/><rect x="3" y="3" width="5" height="5" transform="rotate(45 5.5 5.5)" fill="#fff" stroke="#3a3ad8" stroke-width="1.6"/><rect x="14.5" y="14.5" width="5" height="5" transform="rotate(45 17 17)" fill="#fff" stroke="#2a9a50" stroke-width="1.6"/></svg>
<svg class="a" style="left:1870.70px;top:823.70px;" width="17.60" height="17.60" viewBox="0 0 22 22"><path d="M4 18 H18 V4" fill="none" stroke="#777" stroke-width="1.2"/><circle cx="10" cy="10" r="2" fill="#fff" stroke="#2a9a50" stroke-width="1.4"/></svg>
<svg class="a" style="left:1870.70px;top:860.70px;" width="17.60" height="17.60" viewBox="0 0 22 22"><path d="M4 18 H18 V4" fill="none" stroke="#444" stroke-dasharray="1.5 1.2"/><path d="M10 6 V14 M6 10 H14" stroke="#222" stroke-width="1.2"/></svg>
<svg class="a" style="left:1870.70px;top:895.20px;" width="17.60" height="17.60" viewBox="0 0 22 22"><text x="4" y="19" font-family="Liberation Sans" font-weight="bold" font-size="20" fill="#111">A</text><rect x="2" y="15" width="4" height="4" transform="rotate(45 4 17)" fill="#fff" stroke="#2a9a50" stroke-width="1.4"/></svg>
<svg class="a" style="left:1870.70px;top:944.20px;" width="17.60" height="17.60" viewBox="0 0 22 22"><defs><linearGradient id="pg" x1="0" y1="0" x2="1" y2="1"><stop offset="0" stop-color="#fff"/><stop offset="1" stop-color="#999"/></linearGradient></defs><rect x="5" y="2" width="13" height="18" fill="url(#pg)" stroke="#333" stroke-width="1.2"/></svg>
<svg class="a" style="left:1870.70px;top:979.20px;" width="17.60" height="17.60" viewBox="0 0 22 22"><path d="M5 3 V19 M9 3 V19 M13 3 V19 M17 3 V19 M3 5 H19 M3 9 H19 M3 13 H19 M3 17 H19" stroke="#2222d8" stroke-width="1.4"/></svg>
<svg class="a" style="left:1870.70px;top:1014.20px;" width="17.60" height="17.60" viewBox="0 0 22 22"><path d="M4 3 V19 M18 3 V19 M8 18 L14 4" stroke="#2222d8" stroke-width="1.5"/></svg>
<div class="a" style="left:0px;top:1165px;width:1865px;height:35px;background:#cfcdce"></div>
<svg class="a" style="left:1px;top:1166px;" width="1864" height="19" viewBox="0 0 1864 19"><rect x="-13.80" y="0" width="19.10" height="19" fill="#1e2010"/><rect x="5.00" y="0" width="19.11" height="19" fill="#454a12"/><rect x="23.81" y="0" width="19.11" height="19" fill="#6b7a22"/><rect x="42.61" y="0" width="19.11" height="19" fill="#8fa52c"/><rect x="61.42" y="0" width="19.11" height="19" fill="#adc83a"/><rect x="80.23" y="0" width="19.11" height="19" fill="#c3d865"/><rect x="99.03" y="0" width="19.11" height="19" fill="#d2e08f"/><rect x="117.84" y="0" width="19.11" height="19" fill="#e0e8b5"/><rect x="136.65" y="0" width="19.11" height="19" fill="#f0f3dc"/><rect x="155.45" y="0" width="19.11" height="19" fill="#262624"/><rect x="174.26" y="0" width="19.11" height="19" fill="#46463a"/><rect x="193.07" y="0" width="19.11" height="19" fill="#6b6c58"/><rect x="211.87" y="0" width="19.11" height="19" fill="#8e907a"/><rect x="230.68" y="0" width="19.11" height="19" fill="#aaad98"/><rect x="249.49" y="0" width="19.11" height="19" fill="#c9cabc"/><rect x="268.29" y="0" width="19.11" height="19" fill="#e4e4de"/><rect x="287.10" y="0" width="19.11" height="19" fill="#132a03"/><rect x="305.91" y="0" width="19.11" height="19" fill="#255305"/><rect x="324.72" y="0" width="19.11" height="19" fill="#387d08"/><rect x="343.53" y="0" width="19.11" height="19" fill="#4ba70b"/><rect x="362.34" y="0" width="19.11" height="19" fill="#5dd00d"/><rect x="381.15" y="0" width="19.11" height="19" fill="#70fa10"/><rect x="399.95" y="0" width="19.11" height="19" fill="#88fb38"/><rect x="418.76" y="0" width="19.11" height="19" fill="#a0fc60"/><rect x="437.57" y="0" width="19.11" height="19" fill="#b8fc88"/><rect x="456.38" y="0" width="19.11" height="19" fill="#cffdaf"/><rect x="475.19" y="0" width="19.11" height="19" fill="#e7fed7"/><rect x="494.00" y="0" width="19.14" height="19" fill="#1b2a0c"/><rect x="512.84" y="0" width="19.14" height="19" fill="#2d5416"/><rect x="531.67" y="0" width="19.14" height="19" fill="#437a22"/><rect x="550.51" y="0" width="19.14" height="19" fill="#5a9a2c"/><rect x="569.35" y="0" width="19.14" height="19" fill="#72c040"/><rect x="588.19" y="0" width="19.14" height="19" fill="#8fd45f"/><rect x="607.02" y="0" width="19.14" height="19" fill="#a8de88"/><rect x="625.86" y="0" width="19.14" height="19" fill="#c6ecb0"/><rect x="644.70" y="0" width="19.14" height="19" fill="#e4f7d9"/><rect x="663.54" y="0" width="19.14" height="19" fill="#272622"/><rect x="682.38" y="0" width="19.14" height="19" fill="#424637"/><rect x="701.21" y="0" width="19.14" height="19" fill="#626a56"/><rect x="720.05" y="0" width="19.14" height="19" fill="#7f8c70"/><rect x="738.89" y="0" width="19.14" height="19" fill="#a2ad92"/><rect x="757.72" y="0" width="19.14" height="19" fill="#c5cbbd"/><rect x="776.56" y="0" width="19.14" height="19" fill="#e2e5df"/><rect x="795.40" y="0" width="19.11" height="19" fill="#002a00"/><rect x="814.21" y="0" width="19.11" height="19" fill="#005500"/><rect x="833.02" y="0" width="19.11" height="19" fill="#008000"/><rect x="851.83" y="0" width="19.11" height="19" fill="#00aa00"/><rect x="870.64" y="0" width="19.11" height="19" fill="#00d400"/><rect x="889.45" y="0" width="19.11" height="19" fill="#00ff00"/><rect x="908.25" y="0" width="19.11" height="19" fill="#2aff2a"/><rect x="927.06" y="0" width="19.11" height="19" fill="#55ff55"/><rect x="945.87" y="0" width="19.11" height="19" fill="#80ff80"/><rect x="964.68" y="0" width="19.11" height="19" fill="#aaffaa"/><rect x="983.49" y="0" width="19.11" height="19" fill="#d4ffd4"/><rect x="1002.30" y="0" width="19.16" height="19" fill="#0a2a0a"/><rect x="1021.16" y="0" width="19.16" height="19" fill="#155515"/><rect x="1040.01" y="0" width="19.16" height="19" fill="#208020"/><rect x="1058.87" y="0" width="19.16" height="19" fill="#2aa02a"/><rect x="1077.72" y="0" width="19.16" height="19" fill="#35c435"/><rect x="1096.58" y="0" width="19.16" height="19" fill="#5ad55a"/><rect x="1115.44" y="0" width="19.16" height="19" fill="#85de85"/><rect x="1134.29" y="0" width="19.16" height="19" fill="#aee8ae"/><rect x="1153.15" y="0" width="19.16" height="19" fill="#d6f4d6"/><rect x="1172.01" y="0" width="19.16" height="19" fill="#232323"/><rect x="1190.86" y="0" width="19.16" height="19" fill="#3a4a3a"/><rect x="1209.72" y="0" width="19.16" height="19" fill="#5a6f5a"/><rect x="1228.58" y="0" width="19.16" height="19" fill="#789478"/><rect x="1247.43" y="0" width="19.16" height="19" fill="#9bb09b"/><rect x="1266.29" y="0" width="19.16" height="19" fill="#bccbbc"/><rect x="1285.14" y="0" width="19.16" height="19" fill="#dfe3df"/><rect x="1304.00" y="0" width="19.12" height="19" fill="#002a12"/><rect x="1322.82" y="0" width="19.12" height="19" fill="#005523"/><rect x="1341.64" y="0" width="19.12" height="19" fill="#008035"/><rect x="1360.45" y="0" width="19.12" height="19" fill="#00aa47"/><rect x="1379.27" y="0" width="19.12" height="19" fill="#00d458"/><rect x="1398.09" y="0" width="19.12" height="19" fill="#00ff6a"/><rect x="1416.91" y="0" width="19.12" height="19" fill="#2aff83"/><rect x="1435.73" y="0" width="19.12" height="19" fill="#55ff9c"/><rect x="1454.55" y="0" width="19.12" height="19" fill="#80ffb4"/><rect x="1473.36" y="0" width="19.12" height="19" fill="#aaffcd"/><rect x="1492.18" y="0" width="19.12" height="19" fill="#d4ffe6"/><rect x="1511.00" y="0" width="19.08" height="19" fill="#0a2a15"/><rect x="1529.78" y="0" width="19.08" height="19" fill="#1a5530"/><rect x="1548.56" y="0" width="19.08" height="19" fill="#208040"/><rect x="1567.33" y="0" width="19.08" height="19" fill="#2aa050"/><rect x="1586.11" y="0" width="19.08" height="19" fill="#40c070"/><rect x="1604.89" y="0" width="19.08" height="19" fill="#60d690"/><rect x="1623.67" y="0" width="19.08" height="19" fill="#8de0ac"/><rect x="1642.44" y="0" width="19.08" height="19" fill="#b4ebc8"/><rect x="1661.22" y="0" width="19.08" height="19" fill="#d9f5e4"/><rect x="1680.00" y="0" width="19.16" height="19" fill="#232323"/><rect x="1698.86" y="0" width="19.16" height="19" fill="#3a4a42"/><rect x="1717.71" y="0" width="19.16" height="19" fill="#5a6f62"/><rect x="1736.57" y="0" width="19.16" height="19" fill="#789480"/><rect x="1755.43" y="0" width="19.16" height="19" fill="#9bb0a2"/><rect x="1774.29" y="0" width="19.16" height="19" fill="#bccbc2"/><rect x="1793.14" y="0" width="19.16" height="19" fill="#dfe6e2"/><rect x="1812.00" y="0" width="19.07" height="19" fill="#002a22"/><rect x="1830.77" y="0" width="19.07" height="19" fill="#005544"/><rect x="1849.53" y="0" width="19.07" height="19" fill="#008066"/></svg>
<div class="a" style="left:521px;top:1190px;width:420px;height:7px;background:#878787;border-radius:4px"></div>
<svg class="a" style="left:1879px;top:1177px;" width="8" height="13" viewBox="0 0 8 13"><path d="M7 0 L0 6.5 L7 13 Z" fill="#222"/></svg>
<div class="t" style="left:24px;top:1206.10px;font-size:14px;line-height:14px;color:#4a4a4a;font-weight:normal;">Fill:</div>
<div class="t" style="left:2.5px;top:1226.60px;font-size:14px;line-height:14px;color:#4a4a4a;font-weight:normal;">Stroke:</div>
<div class="t" style="left:65.5px;top:1205.85px;font-size:14.3px;line-height:14.3px;color:#2a2a2a;font-weight:bold;">Unset</div>
<div class="t" style="left:65.5px;top:1226.35px;font-size:14.3px;line-height:14.3px;color:#2a2a2a;font-weight:bold;">Unset</div>
<div class="t" style="left:121.5px;top:1226.60px;font-size:14px;line-height:14px;color:#3a3a3a;font-weight:normal;">1.00</div>
<div class="t" style="left:155px;top:1215.60px;font-size:14px;line-height:14px;color:#4a4a4a;font-weight:normal;">O:</div>
<div class="a" style="left:170px;top:1202px;width:68px;height:40px;background:#fff;border:1px solid #d3cfcc;border-radius:5px"></div>
<div class="a" style="left:203px;top:1203px;width:1px;height:38px;background:#ebe8e6"></div>
<div class="a" style="left:220px;top:1203px;width:1px;height:38px;background:#ebe8e6"></div>
<div class="a" style="left:205.5px;top:1221.3px;width:12px;height:1.5px;background:#2b2b2b"></div>
<div class="a" style="left:222.5px;top:1221.3px;width:13px;height:1.5px;background:#2b2b2b"></div>
<div class="a" style="left:228.25px;top:1215.5px;width:1.5px;height:13px;background:#2b2b2b"></div>
<div class="t" style="left:173.5px;top:1215.10px;font-size:14px;line-height:14px;color:#1e1e1e;font-weight:normal;">100</div>
<div class="a" style="left:222px;top:1212px;width:14px;height:20px;background:#fff"></div>
<div class="a" style="left:223px;top:1221.3px;width:12px;height:1.5px;background:#c8c8c8"></div>
<div class="a" style="left:228.3px;top:1216px;width:1.5px;height:12px;background:#c8c8c8"></div>
<div class="a" style="left:249px;top:1205px;width:1px;height:35px;background:#e0dcda"></div>
<svg class="a" style="left:258px;top:1214px;" width="18" height="14" viewBox="0 0 18 14"><path d="M1 8 C5 2 13 2 17 8 C13 13 5 13 1 8 Z" fill="#fff" stroke="#111" stroke-width="1.4"/><circle cx="9" cy="8" r="3" fill="#111"/><path d="M3 4 L1 2 M6 2.5 L5 0.5 M12 2.5 L13 0.5 M15 4 L17 2" stroke="#111"/></svg>
<svg class="a" style="left:295px;top:1213px;" width="16" height="17" viewBox="0 0 16 17"><path d="M4 8 V5 A3.5 3.5 0 0 1 11 5" fill="none" stroke="#222" stroke-width="1.5"/><rect x="2" y="8" width="11" height="8" rx="1" fill="#f2e27a" stroke="#222" stroke-width="1.3"/><rect x="6.8" y="10.5" width="1.5" height="3" fill="#222"/></svg>
<div class="a" style="left:321px;top:1202px;width:88px;height:40px;background:#f3f1f0;border:1px solid #d0ccca;border-radius:5px;box-shadow:0 1px 0 #dcd9d7"></div>
<div class="t" style="left:334px;top:1216.45px;font-size:13px;line-height:13px;color:#2a2a2a;font-weight:bold;letter-spacing:-0.2px">•Layer 1</div>
<svg class="a" style="left:386px;top:1217px;" width="11" height="8" viewBox="0 0 11 8"><path d="M0 0 H11 L5.5 7 Z" fill="#222"/></svg>
<div class="t" style="left:411.5px;top:1214.88px;font-size:14.85px;line-height:14.85px;color:#333;font-weight:normal;"><b>Group</b> of <b>2</b> objects in layer <b>Layer 1</b>. Click selection again to toggle scale/rotation handles.</div>
<div class="a" style="left:1544px;top:1201px;width:1px;height:42px;background:#e0dcda"></div>
<div class="t" style="left:1554.5px;top:1206.03px;font-size:13.5px;line-height:13.5px;color:#4a4a4a;font-weight:normal;">X:</div>
<div class="t" style="left:1554.5px;top:1226.53px;font-size:13.5px;line-height:13.5px;color:#4a4a4a;font-weight:normal;">Y:</div>
<div class="t" style="left:1572px;top:1206.03px;font-size:13.5px;line-height:13.5px;color:#333;font-weight:normal;width:50px;text-align:right">97.86</div>
<div class="t" style="left:1572px;top:1226.53px;font-size:13.5px;line-height:13.5px;color:#333;font-weight:normal;width:50px;text-align:right">143.42</div>
<div class="t" style="left:1632px;top:1216.03px;font-size:13.5px;line-height:13.5px;color:#4a4a4a;font-weight:normal;">Z:</div>
<div class="a" style="left:1655px;top:1202px;width:97px;height:40px;background:#fff;border:1px solid #d3cfcc;border-radius:5px"></div>
<div class="a" style="left:1710px;top:1203px;width:1px;height:38px;background:#ebe8e6"></div>
<div class="a" style="left:1731px;top:1203px;width:1px;height:38px;background:#ebe8e6"></div>
<div class="a" style="left:1712.5px;top:1221.3px;width:16px;height:1.5px;background:#2b2b2b"></div>
<div class="a" style="left:1733.5px;top:1221.3px;width:16px;height:1.5px;background:#2b2b2b"></div>
<div class="a" style="left:1740.75px;top:1214.0px;width:1.5px;height:16px;background:#2b2b2b"></div>
<div class="t" style="left:1667.5px;top:1215.86px;font-size:13.7px;line-height:13.7px;color:#222;font-weight:normal;">90%</div>
<div class="t" style="left:1763px;top:1216.03px;font-size:13.5px;line-height:13.5px;color:#4a4a4a;font-weight:normal;">R:</div>
<div class="a" style="left:1786px;top:1202px;width:106px;height:40px;background:#fff;border:1px solid #d3cfcc;border-radius:5px"></div>
<div class="a" style="left:1847px;top:1203px;width:1px;height:38px;background:#ebe8e6"></div>
<div class="a" style="left:1869px;top:1203px;width:1px;height:38px;background:#ebe8e6"></div>
<div class="a" style="left:1849.5px;top:1221.3px;width:17px;height:1.5px;background:#2b2b2b"></div>
<div class="a" style="left:1871.5px;top:1221.3px;width:18px;height:1.5px;background:#2b2b2b"></div>
<div class="a" style="left:1879.75px;top:1213.0px;width:1.5px;height:18px;background:#2b2b2b"></div>
<div class="t" style="left:1801.5px;top:1215.68px;font-size:13.9px;line-height:13.9px;color:#222;font-weight:normal;">0.00°</div>
<div class="t" style="left:1539.5px;top:1141.67px;font-size:24.5px;line-height:24.5px;color:rgba(120,120,120,0.45);font-weight:normal;">Activate Windows</div>
<div class="t" style="left:1539.5px;top:1173.54px;font-size:17.6px;line-height:17.6px;color:rgba(120,120,120,0.38);font-weight:normal;">Go to Settings to activate Windows.</div>
<div class="a" style="left:0px;top:1243px;width:1902px;height:49px;background:#3e1b48"></div>
<div class="a" style="left:0px;top:1243px;width:59px;height:49px;background:#381844"></div>
<svg class="a" style="left:19px;top:1257px;" width="21" height="21" viewBox="0 0 21 21"><path d="M0 3 L9 1.7 V10 H0 Z M10 1.5 L21 0 V10 H10 Z M0 11 H9 V19.3 L0 18 Z M10 11 H21 V21 L10 19.5 Z" fill="#fff"/></svg>
<div class="a" style="left:59px;top:1243px;width:426px;height:49px;background:#f2f0f2"></div>
<svg class="a" style="left:72px;top:1255px;" width="24" height="24" viewBox="0 0 24 24"><circle cx="14" cy="10" r="7" fill="none" stroke="#222" stroke-width="1.8"/><path d="M9 15 L2 22" stroke="#222" stroke-width="2.2"/></svg>
<div class="t" style="left:109.5px;top:1258.53px;font-size:18.2px;line-height:18.2px;color:#3a3a3a;font-weight:normal;">Type here to search</div>
<svg class="a" style="left:395px;top:1243px;" width="90" height="49" viewBox="0 0 90 49"><defs><radialGradient id="moon" cx=".4" cy=".35" r=".7"><stop offset="0" stop-color="#f9e6a0"/><stop offset="1" stop-color="#e4a942"/></radialGradient>
<linearGradient id="hill" x1="0" y1="0" x2="1" y2="0"><stop offset="0" stop-color="#2a1f7a"/><stop offset="1" stop-color="#5b43b8"/></linearGradient></defs>
<circle cx="43" cy="23" r="21" fill="url(#moon)"/>
<path d="M6 49 C15 38 30 36 45 40 C60 44 70 32 90 35 V49 Z" fill="url(#hill)"/>
<path d="M30 49 L33 30 L36 49 Z M38 49 L40 35 L43 49 Z" fill="#3a2a7a"/>
<path d="M17 13 L19 8 L21 13 L26 15 L21 17 L19 22 L17 17 L12 15 Z" fill="#d070e0"/>
<circle cx="83" cy="13" r="2" fill="#5ac8e0"/><circle cx="12" cy="34" r="2.2" fill="#3ac070"/></svg>
<svg class="a" style="left:503px;top:1256px;" width="24" height="21" viewBox="0 0 24 21"><rect x="1.5" y="5" width="12" height="11" fill="none" stroke="#fff" stroke-width="1.6"/><path d="M1 1.5 H14 M1 19.5 H14 M19 1 V20" stroke="#fff" stroke-width="1.6"/><rect x="17.5" y="8.5" width="3" height="4" fill="#fff"/></svg>
<svg class="a" style="left:564px;top:1254px;" width="29" height="25" viewBox="0 0 29 25"><path d="M1 3 H10 L12 5 H28 V23 H1 Z" fill="#e8b640"/><rect x="1" y="8" width="27" height="16" fill="#f7d25c"/><path d="M9 24 V15 H21 V24" fill="none" stroke="#3a8bd8" stroke-width="3.5"/></svg>
<div class="a" style="left:554px;top:1289px;width:50px;height:3px;background:#76b9ed"></div>
<svg class="a" style="left:626px;top:1254px;" width="32" height="28" viewBox="0 0 32 28"><circle cx="13" cy="13" r="12.5" fill="#db4437"/>
<path d="M13 13 L2.2 19.2 A12.5 12.5 0 0 0 19.2 23.8 Z" fill="#0f9d58"/>
<path d="M13 13 L19.2 23.8 A12.5 12.5 0 0 0 25.5 13 L13 13 Z" fill="#f4b400"/>
<circle cx="13" cy="13" r="5.5" fill="#fff"/><circle cx="13" cy="13" r="4.3" fill="#4285f4"/>
<circle cx="22.5" cy="19.5" r="8" fill="#d81b60"/>
<text x="22.5" y="23.5" text-anchor="middle" font-family="Liberation Sans" font-weight="bold" font-size="11" fill="#fff">N</text></svg>
<div class="a" style="left:615px;top:1289px;width:51px;height:3px;background:#76b9ed"></div>
<svg class="a" style="left:688px;top:1254px;" width="32" height="28" viewBox="0 0 32 28"><circle cx="13" cy="13" r="12.5" fill="#db4437"/>
<path d="M13 13 L2.2 19.2 A12.5 12.5 0 0 0 19.2 23.8 Z" fill="#0f9d58"/>
<path d="M13 13 L19.2 23.8 A12.5 12.5 0 0 0 25.5 13 L13 13 Z" fill="#f4b400"/>
<circle cx="13" cy="13" r="5.5" fill="#fff"/><circle cx="13" cy="13" r="4.3" fill="#4285f4"/>
<circle cx="22.5" cy="19.5" r="6.5" fill="#7b5cd6"/>
<text x="22.5" y="22.5" text-anchor="middle" font-family="Liberation Sans" font-weight="bold" font-size="9" fill="#fff">N</text></svg>
<div class="a" style="left:733px;top:1243px;width:60px;height:49px;background:#5b4363"></div>
<div class="a" style="left:733px;top:1289px;width:60px;height:3px;background:#76b9ed"></div>
<svg class="a" style="left:748px;top:1254px;" width="30" height="28" viewBox="0 0 30 28"><path d="M15 1 L28 14 L20 16 L22 21 L15 19 L12 25 L9 18 L2 14 Z" fill="#111"/><path d="M15 4 L20 10 L17 11 L15 8 L13 11 L10 10 Z" fill="#eee"/><ellipse cx="14" cy="23" rx="6" ry="2.3" fill="#222"/></svg>
<svg class="a" style="left:809px;top:1253px;" width="30" height="30" viewBox="0 0 30 30"><rect x="0" y="0" width="30" height="30" rx="9" fill="#3d8cf6"/><rect x="6" y="10" width="12" height="10" rx="2" fill="#fff"/><path d="M19 13.5 L24 10.5 V19.5 L19 16.5 Z" fill="#fff"/></svg>
<div class="a" style="left:799px;top:1289px;width:51px;height:3px;background:#76b9ed"></div>
<svg class="a" style="left:1303px;top:1254px;" width="29" height="25" viewBox="0 0 29 25"><path d="M7 2 A7 7 0 1 0 15 11 A5.5 5.5 0 0 1 7 2 Z" fill="#f6c744"/><path d="M8 23 A5 5 0 0 1 8 13 A7 7 0 0 1 21 11 A5.5 5.5 0 0 1 23 23 Z" fill="#d9ecfa"/></svg>
<div class="t" style="left:1340.5px;top:1262.02px;font-size:16.8px;line-height:16.8px;color:#f4f0f6;font-weight:normal;">26°C</div>
<div class="t" style="left:1389.5px;top:1261.17px;font-size:17.8px;line-height:17.8px;color:#f4f0f6;font-weight:normal;">Mostly cloudy</div>
<svg class="a" style="left:1519px;top:1261px;" width="16" height="10" viewBox="0 0 16 10"><path d="M1 9 L8 2 L15 9" fill="none" stroke="#eee" stroke-width="1.5"/></svg>
<svg class="a" style="left:1549px;top:1257px;" width="17" height="21" viewBox="0 0 17 21"><rect x="2" y="5" width="9" height="10" rx="2" fill="none" stroke="#eee" stroke-width="1.3"/><path d="M11 8 L15 6 V14 L11 12" fill="none" stroke="#eee" stroke-width="1.3"/><path d="M3 2 A8 8 0 0 1 12 2 M3 18 A8 8 0 0 0 12 18" fill="none" stroke="#eee" stroke-width="1"/></svg>
<svg class="a" style="left:1579px;top:1255px;" width="15" height="23" viewBox="0 0 15 23"><rect x="4" y="1" width="7" height="13" rx="3.5" fill="#f4f0f6"/><path d="M2 10 A5.5 5.5 0 0 0 13 10 M7.5 16 V21 M4 21.5 H11" fill="none" stroke="#eee" stroke-width="1.3"/></svg>
<svg class="a" style="left:1606px;top:1257px;" width="22" height="20" viewBox="0 0 22 20"><rect x="5" y="2" width="16" height="11" fill="none" stroke="#eee" stroke-width="1.3"/><path d="M13 13 V17 M9 17.5 H17" stroke="#eee" stroke-width="1.3"/><rect x="1" y="5" width="5" height="8" fill="#3e1b48" stroke="#eee" stroke-width="1.1"/></svg>
<svg class="a" style="left:1636px;top:1257px;" width="21" height="21" viewBox="0 0 21 21"><path d="M1 7 H5 L10 2 V18 L5 13 H1 Z" fill="none" stroke="#eee" stroke-width="1.2"/><path d="M13 6 A5 5 0 0 1 13 14 M16 3 A9 9 0 0 1 16 17 M19 1 A12 12 0 0 1 19 19" fill="none" stroke="#eee" stroke-width="1.2"/></svg>
<svg class="a" style="left:1665px;top:1258px;" width="32" height="18" viewBox="0 0 32 18"><rect x="1" y="1" width="30" height="16" rx="1" fill="none" stroke="#eee" stroke-width="1.3"/><path d="M5 5 H27 M5 8.5 H27 M5 12 H27" stroke="#eee" stroke-width="1.2" stroke-dasharray="2 1.6"/></svg>
<div class="t" style="left:1709px;top:1261.53px;font-size:13.5px;line-height:13.5px;color:#f4f0f6;font-weight:normal;">ENG</div>
<div class="t" style="left:1761.5px;top:1249.77px;font-size:13.8px;line-height:13.8px;color:#f4f0f6;font-weight:normal;">10:10 PM</div>
<div class="t" style="left:1754px;top:1270.85px;font-size:14.3px;line-height:14.3px;color:#f4f0f6;font-weight:normal;">14-06-2022</div>
<svg class="a" style="left:1851px;top:1256px;" width="21" height="21" viewBox="0 0 21 21"><path d="M1.5 1.5 H19.5 V15.5 H12 L8 19.5 V15.5 H1.5 Z" fill="none" stroke="#eee" stroke-width="1.3"/></svg>
<div class="a" style="left:1896px;top:1243px;width:1px;height:49px;background:#6a4a72"></div>
<div class="a" style="left:1908px;top:735px;width:8px;height:48px;background:#d0d0d0;border-radius:4px"></div>
<div class="a" style="left:1902px;top:224px;width:2px;height:1068px;background:#0d0d0d"></div>
<div class="a" style="left:1936px;top:318px;width:288px;height:162px;border-radius:11px;overflow:hidden;background:#262626;border:4px solid #4bc75a"><svg width="216" height="150" viewBox="0 0 216 150" style="position:absolute;left:32px;top:2px">
<defs><filter id="bl1" x="-5%" y="-5%" width="110%" height="110%"><feGaussianBlur stdDeviation="1.0"/></filter></defs>
<g filter="url(#bl1)">
<rect width="216" height="150" fill="#f0d23a"/>
<rect x="52" y="0" width="164" height="58" fill="#8eaabb"/>
<path d="M0 0 H45 L40 26 H0 Z" fill="#f07ab8"/>
<path d="M3 6 L16 2 L22 14 L12 24 L4 18 Z" fill="#1c1c22"/>
<path d="M22 28 L38 24 L36 40 L24 40 Z" fill="#3ad070"/>
<path d="M56 8 L66 4 L80 38 L70 44 Z" fill="#2e3640"/>
<path d="M88 8 L96 6 L100 44 L93 48 Z" fill="#2e3640"/>
<path d="M112 0 L120 0 L124 50 L117 52 Z" fill="#2e3640"/>
<path d="M144 10 L152 8 L160 52 L152 54 Z" fill="#2e3640"/>
<path d="M176 14 L205 10 L208 18 L184 22 Z" fill="#2e3640"/><path d="M180 44 L206 40 L210 54 L185 56 Z" fill="#2e3640"/>
<path d="M186 24 L200 22 L202 42 L190 44 Z" fill="#30c8b0"/>
<path d="M152 0 H175 L170 30 H150 Z" fill="#30c8b0"/>
<path d="M205 0 H216 V110 L205 100 Z" fill="#30c8b0"/>
<path d="M132 44 L160 50 L158 112 L134 110 Z" fill="#3a90e0"/>
<path d="M40 40 L60 36 L80 60 L64 80 L46 74 Z" fill="#f2d020"/>
<path d="M40 72 L62 70 L75 108 L58 115 L48 100 Z" fill="#2a3a90"/>
<path d="M0 108 L60 104 L66 150 H0 Z" fill="#2ac060"/>
<path d="M4 78 L24 76 L26 124 L6 126 Z" fill="#f0a8d0"/>
<path d="M5 124 L28 124 L28 150 H6 Z" fill="#e85a5a"/>
<path d="M8 58 C10 50 22 50 24 60 L22 72 L10 72 Z" fill="#1e2a40"/>
<path d="M162 52 C170 50 180 52 182 62 L186 110 L170 140 L150 138 L160 100 Z" fill="#f0a030"/>
<path d="M166 25 C172 20 182 24 180 40 L178 60 L168 58 Z" fill="#1a1a20"/>
<ellipse cx="192" cy="112" rx="30" ry="37" fill="#f2b03a"/>
<circle cx="200" cy="106" r="15" fill="#c07040"/>
<path d="M130 120 L175 118 L180 150 H125 Z" fill="#b86a40"/>
<path d="M40 150 C50 136 70 130 95 130 H130 C150 132 160 140 165 150 Z" fill="#1a2030"/>
<path d="M62 80 C58 60 75 52 94 54 C118 54 128 66 126 84 L124 100 L64 100 Z" fill="#161412"/>
<path d="M66 92 C66 84 122 84 122 92 L120 122 C114 140 74 140 68 122 Z" fill="#6e4a38"/>
<path d="M68 118 C72 138 116 138 121 118 L120 132 C112 145 78 145 70 132 Z" fill="#1c1410"/>
<rect x="69" y="101" width="22" height="12" rx="2" fill="none" stroke="#1a1210" stroke-width="2.2"/>
<rect x="96" y="101" width="22" height="12" rx="2" fill="none" stroke="#1a1210" stroke-width="2.2"/>
<rect x="62" y="104" width="6" height="14" rx="2" fill="#151515"/>
</g></svg></div>
<div class="a" style="left:1936px;top:492px;width:288px;height:162px;border-radius:11px;overflow:hidden;background:#242424;"><svg width="162" height="162" viewBox="0 0 162 162" style="position:absolute;left:63px;top:0">
<defs><filter id="bl2"><feGaussianBlur stdDeviation="0.9"/></filter></defs>
<g filter="url(#bl2)">
<rect width="162" height="162" fill="#ececec"/>
<rect x="0" y="0" width="162" height="55" fill="#2a2628"/>
<rect x="25" y="0" width="12" height="42" fill="#dcdcdc"/>
<rect x="46" y="0" width="100" height="45" fill="#161616"/>
<rect x="145" y="0" width="17" height="45" fill="#c8c8c8"/>
<rect x="0" y="55" width="162" height="107" fill="#e8e8ea"/>
<rect x="0" y="112" width="40" height="14" fill="#2a2a35"/>
<rect x="0" y="126" width="30" height="28" fill="#dadada"/>
<path d="M20 42 L125 38 L160 108 L55 150 Z" fill="#101010"/>
<path d="M24 46 L122 42 L154 106 L58 142 Z" fill="#141a14"/>
<path d="M60 130 L150 100" stroke="#2a8a2a" stroke-width="2"/>
<path d="M55 150 L160 108 V162 H75 Z" fill="#a8a8a8"/>
<path d="M85 150 L130 132 L145 155 L100 162 Z" fill="#1a1a1a"/>
<path d="M125 125 C140 118 162 120 162 125 V162 H135 C128 150 120 140 125 125 Z" fill="#e6c0aa"/>
</g></svg></div>
<div class="a" style="left:1936px;top:666px;width:288px;height:162px;border-radius:11px;overflow:hidden;background:#d0d0c8;"><svg width="288" height="162" viewBox="0 0 288 162" style="position:absolute;left:0;top:0">
<defs><filter id="bl3" x="-10%" y="-10%" width="120%" height="120%"><feGaussianBlur stdDeviation="5"/></filter>
<linearGradient id="g3" x1="0" y1="0" x2="1" y2="0"><stop offset="0" stop-color="#c4c5ba"/><stop offset=".4" stop-color="#d6d4c4"/><stop offset="1" stop-color="#e2e2e0"/></linearGradient></defs>
<g filter="url(#bl3)">
<rect x="-10" y="-10" width="310" height="182" fill="url(#g3)"/>
<rect x="145" y="-10" width="110" height="62" fill="#e9e9e8"/>
<rect x="150" y="58" width="100" height="110" fill="#b2bcc6"/>
<rect x="255" y="0" width="40" height="140" fill="#f0f0f2"/>
<ellipse cx="228" cy="115" rx="20" ry="13" fill="#4aaaf0"/>
<rect x="-5" y="148" width="40" height="20" fill="#7a9ad0"/>
<rect x="240" y="135" width="50" height="30" fill="#b8b8b8"/>
</g>
<g filter="url(#bl1)">
<path d="M120 162 C118 120 135 90 160 89 C185 88 198 110 196 162 Z" fill="#2a282e"/>
<path d="M136 130 C136 118 188 118 188 130 L188 162 H136 Z" fill="#8e7266"/>
<rect x="135" y="138" width="50" height="6" fill="#5a4a48" opacity=".6"/>
<rect x="123" y="128" width="6" height="20" rx="3" fill="#b02a3a"/>
<path d="M195 104 C200 100 206 110 210 130 L222 162 H196 Z" fill="#caa494"/>
</g></svg></div>
<div class="a" style="left:1936px;top:840px;width:288px;height:162px;border-radius:11px;overflow:hidden;background:#dcdcdc;"><svg width="288" height="162" viewBox="0 0 288 162" style="position:absolute;left:0;top:0">
<defs><filter id="bl4" x="-10%" y="-10%" width="120%" height="120%"><feGaussianBlur stdDeviation="1.6"/></filter>
<linearGradient id="g4" x1="0" y1="0" x2="0" y2="1"><stop offset="0" stop-color="#e4e4e6"/><stop offset="1" stop-color="#d2d4d8"/></linearGradient></defs>
<g filter="url(#bl4)">
<rect width="288" height="162" fill="url(#g4)"/>
<rect x="262" y="25" width="26" height="137" fill="#ededf0"/>
<rect x="68" y="15" width="96" height="49" fill="#8a8262"/>
<rect x="72" y="19" width="88" height="41" fill="#56624a"/>
<ellipse cx="95" cy="45" rx="12" ry="8" fill="#9aa090"/><ellipse cx="120" cy="40" rx="10" ry="10" fill="#a8aca0"/><ellipse cx="140" cy="48" rx="9" ry="6" fill="#8a9080"/>
<rect x="37" y="35" width="13" height="23" fill="#d6d2c2"/>
<rect x="193" y="30" width="45" height="15" fill="#9a9a9a"/>
<path d="M45 162 C50 120 65 70 110 65 C150 62 175 100 195 162 Z" fill="#1a1618"/>
<ellipse cx="125" cy="108" rx="27" ry="36" fill="#8e6a62"/>
<rect x="102" y="88" width="21" height="12" rx="3" fill="none" stroke="#222" stroke-width="3"/>
<rect x="127" y="88" width="21" height="12" rx="3" fill="none" stroke="#222" stroke-width="3"/>
<ellipse cx="123" cy="122" rx="10" ry="4" fill="#7a3a38"/>
</g></svg></div>
<div class="a" style="left:1936px;top:1014px;width:288px;height:162px;border-radius:11px;overflow:hidden;background:#b8b090;"><svg width="288" height="162" viewBox="0 0 288 162" style="position:absolute;left:0;top:0">
<defs><filter id="bl5" x="-10%" y="-10%" width="120%" height="120%"><feGaussianBlur stdDeviation="1.5"/></filter>
<filter id="bl5b" x="-30%" y="-30%" width="160%" height="160%"><feGaussianBlur stdDeviation="12"/></filter>
<linearGradient id="g5" x1="0" y1="0" x2="0.3" y2="1"><stop offset="0" stop-color="#c2b592"/><stop offset="1" stop-color="#948a68"/></linearGradient>
<linearGradient id="g5r" x1="0" y1="0" x2="0" y2="1"><stop offset="0" stop-color="#b4b48a"/><stop offset="1" stop-color="#86865e"/></linearGradient></defs>
<g filter="url(#bl5)">
<rect width="288" height="162" fill="url(#g5)"/>
<path d="M170 0 L212 0 V162 H175 Z" fill="url(#g5r)"/>
</g>
<g filter="url(#bl5b)"><ellipse cx="148" cy="40" rx="45" ry="55" fill="#fbfbea"/><ellipse cx="150" cy="30" rx="28" ry="32" fill="#ffffff"/></g>
<g filter="url(#bl5)">
<path d="M178 0 H186 L182 45 L176 50 Z" fill="#f4f4ec"/>
<rect x="212" y="0" width="38" height="162" fill="#4e4c34"/>
<rect x="250" y="0" width="38" height="162" fill="#121210"/>
<path d="M128 86 L182 112 V162 H128 Z" fill="#0e0e0e"/>
<rect x="187" y="38" width="8" height="30" rx="3" fill="#1a1a1a"/>
<path d="M0 135 L52 132 V162 H0 Z" fill="#3e3c5a"/>
<path d="M8 162 C28 150 60 144 105 144 C120 148 130 155 136 162 Z" fill="#8a8682"/>
<path d="M38 40 C45 20 100 20 108 45 C112 70 108 90 100 112 L96 142 C110 146 118 152 120 162 H50 L55 132 C45 112 40 92 35 82 C30 70 32 55 38 40 Z" fill="#0a0a08"/>
</g></svg></div>
</body></html>
